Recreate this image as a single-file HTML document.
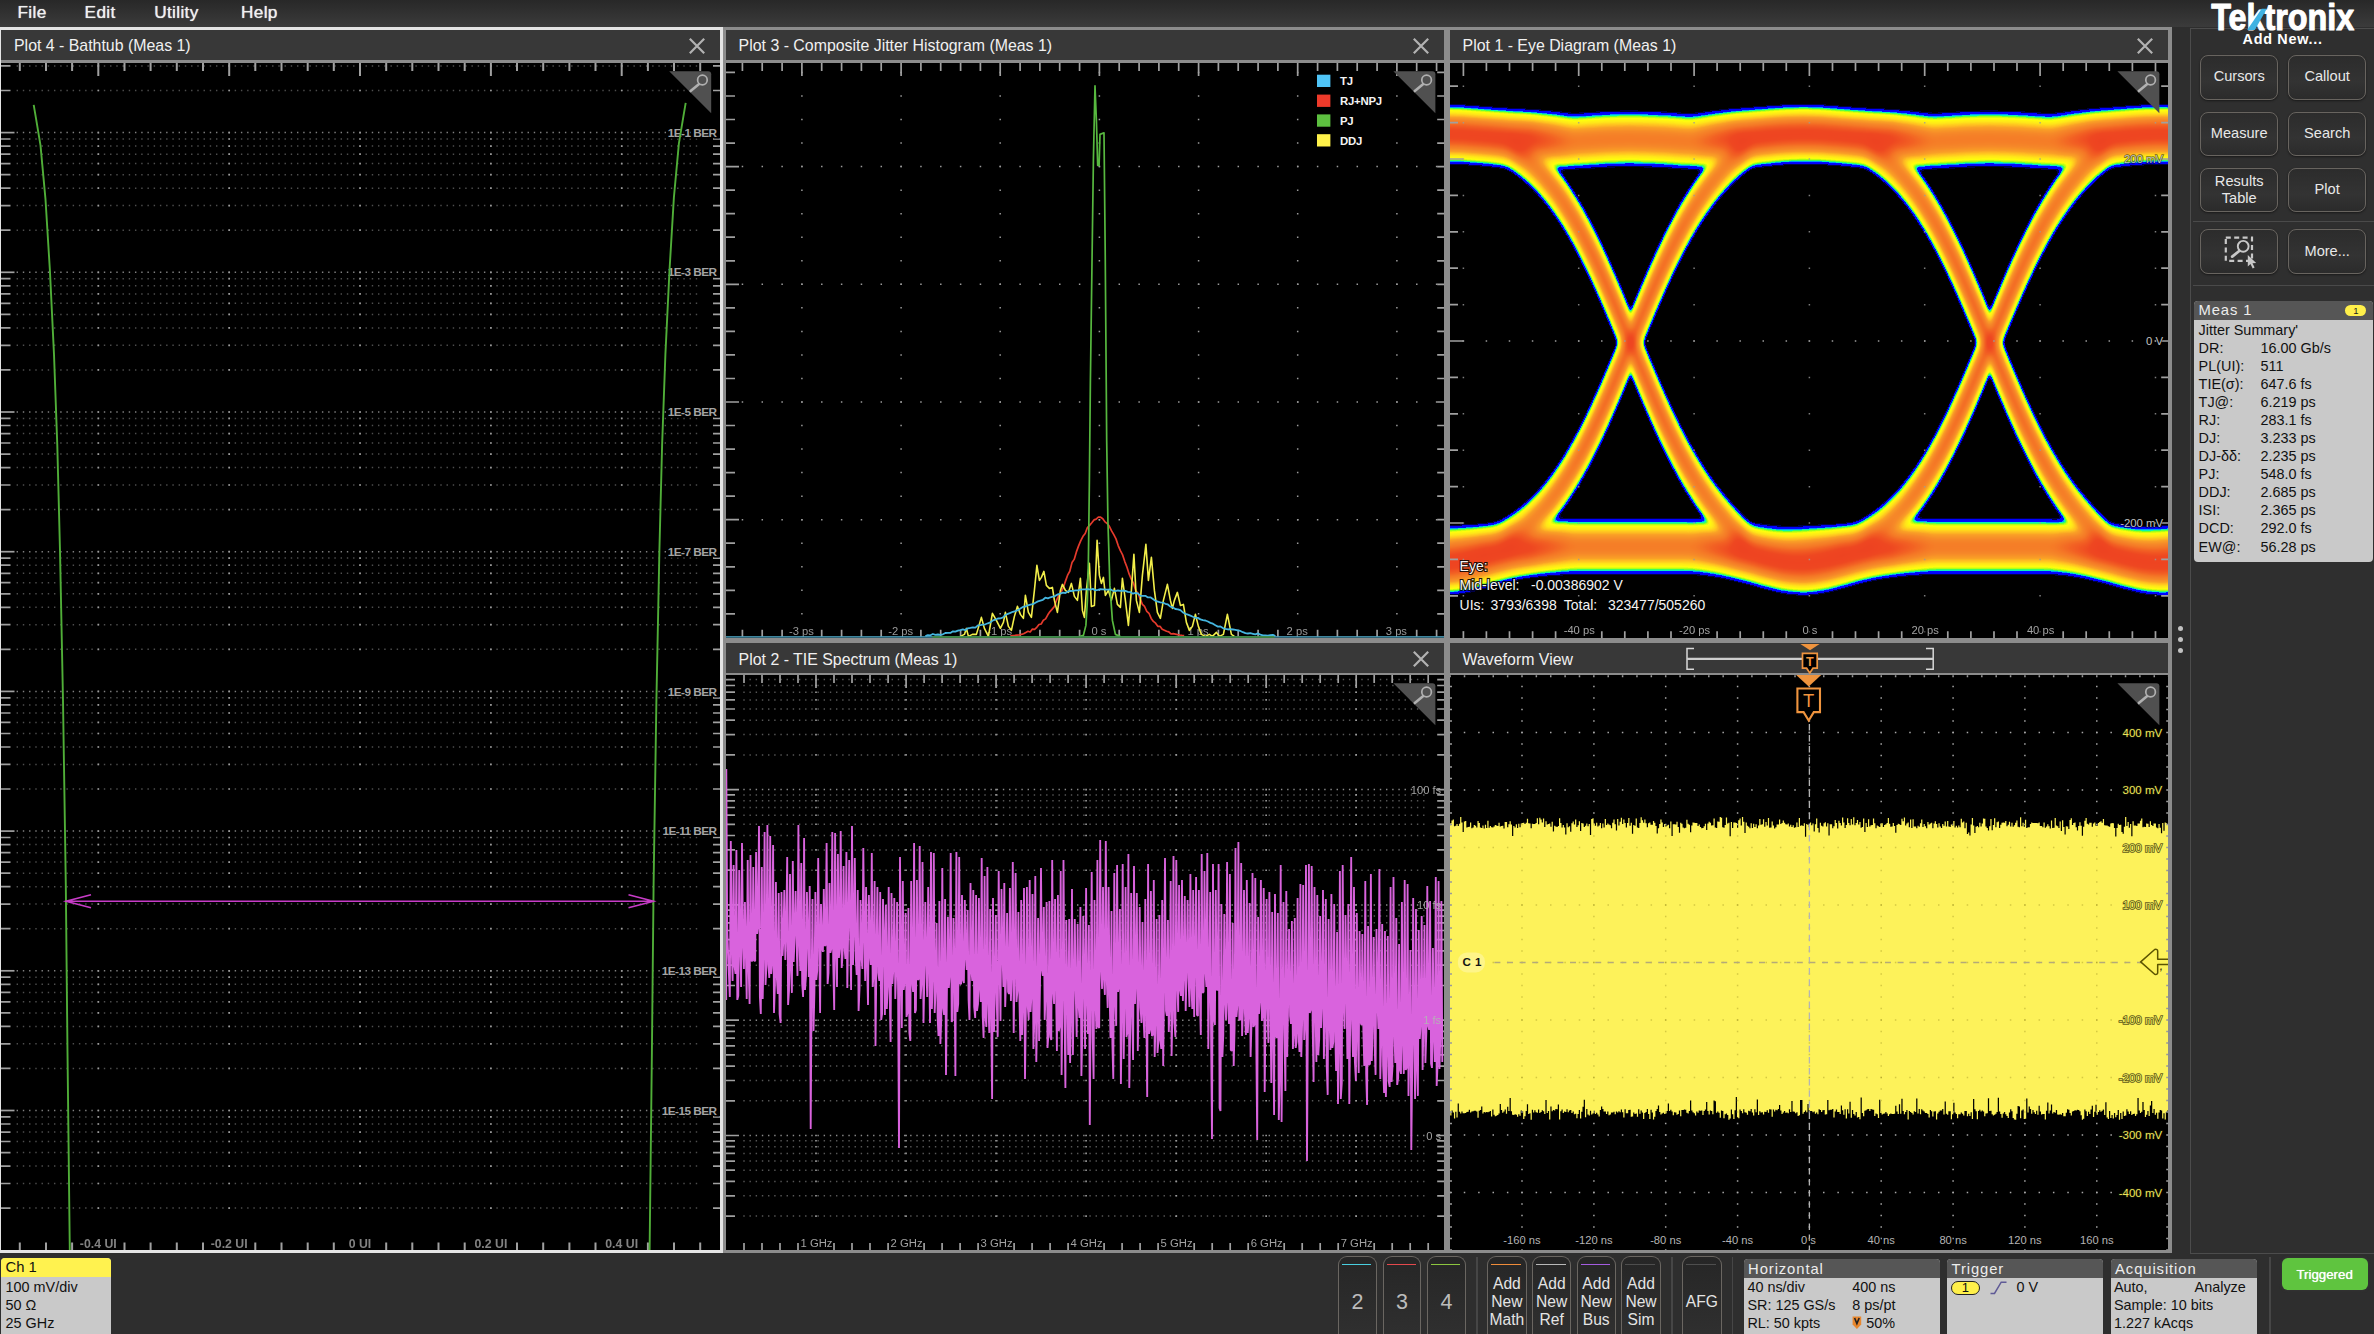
<!DOCTYPE html>
<html><head><meta charset="utf-8"><title>Scope</title>
<style>
html,body{margin:0;padding:0;background:#2e2e2e;}
body{width:2374px;height:1334px;position:relative;overflow:hidden;font-family:"Liberation Sans", sans-serif;color:#e6e6e6;}
.abs,.pb,.pt,.pp,.plot{position:absolute;}
.pt{background:#383838;color:#f0f0f0;font-size:15.9px;box-sizing:border-box;padding-left:13px;white-space:nowrap;}
.pp{background:#000;}
.plot{overflow:hidden;}
#menu{left:0;top:0;width:2374px;height:27.2px;background:linear-gradient(#282828,#3b3b3b);}
#menu span{position:absolute;top:0;line-height:25px;font-size:17.2px;letter-spacing:0.35px;color:#f0f0f0;text-shadow:0 0 0.9px #f0f0f0;}
.btn{position:absolute;box-sizing:border-box;border:1.3px solid #68645f;border-radius:8px;background:linear-gradient(#2c2c2c,#333 60%,#2b2b2b);color:#e8e8e8;font-size:14.6px;text-align:center;box-shadow:0 1px 2px #1a1a1a;}
.bb{position:absolute;box-sizing:border-box;border:1.3px solid #6a6661;border-bottom:none;border-radius:9px 9px 0 0;background:linear-gradient(#262626,#303030);color:#e4e4e4;text-align:center;font-size:15.6px;}
.bb i{position:absolute;left:3px;right:4.5px;top:6.8px;height:1.7px;display:block;}
.bb span{position:absolute;left:-6px;right:-6px;display:block;line-height:18px;}
.badge{position:absolute;box-sizing:border-box;background:#c9c9c9;color:#111;font-size:14.4px;border-radius:4px 4px 0 0;overflow:hidden;}
.badge .h{position:absolute;left:0;right:0;top:0;background:#565656;color:#ededed;padding-left:4.5px;font-size:14.8px;letter-spacing:0.9px;}
.badge span{position:absolute;white-space:pre;line-height:18px;}
.vs{position:absolute;width:1.6px;background:#464646;}
</style></head><body>
<div id="menu" class="abs"><span style="left:17.5px">File</span><span style="left:84.6px">Edit</span><span style="left:154.2px">Utility</span><span style="left:241px">Help</span></div>
<div class="pb" style="left:723px;top:27.2px;width:723.6px;height:614.3px;background:#8c8c8c"></div>
<div class="pt" style="left:725.6px;top:29.7px;width:718.2px;height:30.7px;line-height:32.2px">Plot 3 - Composite Jitter Histogram (Meas 1)</div>
<div class="pp" style="left:725.6px;top:62.6px;width:718.2px;height:575.2px"></div>
<svg class="abs" style="left:1411.2px;top:35.8px" width="20" height="20" viewBox="-10 -10 20 20"><path d="M-7.2 -7.2 L7.2 7.2 M7.2 -7.2 L-7.2 7.2" stroke="#b2b2b2" stroke-width="2.2" fill="none"/></svg>
<div class="pb" style="left:723px;top:640.5px;width:723.6px;height:612.8px;background:#8c8c8c"></div>
<div class="pt" style="left:725.6px;top:643px;width:718.2px;height:29.6px;line-height:34.6px">Plot 2 - TIE Spectrum (Meas 1)</div>
<div class="pp" style="left:725.6px;top:675.1px;width:718.2px;height:575px"></div>
<svg class="abs" style="left:1411.2px;top:648.6px" width="20" height="20" viewBox="-10 -10 20 20"><path d="M-7.2 -7.2 L7.2 7.2 M7.2 -7.2 L-7.2 7.2" stroke="#b2b2b2" stroke-width="2.2" fill="none"/></svg>
<div class="pb" style="left:1446px;top:27.2px;width:725.6px;height:614.3px;background:#8c8c8c"></div>
<div class="pt" style="left:1449.6px;top:29.7px;width:718.2px;height:30.7px;line-height:32.2px">Plot 1 - Eye Diagram (Meas 1)</div>
<div class="pp" style="left:1449.6px;top:62.6px;width:718.2px;height:575.2px"></div>
<svg class="abs" style="left:2135.2px;top:35.8px" width="20" height="20" viewBox="-10 -10 20 20"><path d="M-7.2 -7.2 L7.2 7.2 M7.2 -7.2 L-7.2 7.2" stroke="#b2b2b2" stroke-width="2.2" fill="none"/></svg>
<div class="pb" style="left:1446px;top:640.5px;width:725.6px;height:612.8px;background:#8c8c8c"></div>
<div class="pt" style="left:1449.6px;top:643px;width:718.2px;height:29.6px;line-height:34.6px">Waveform View</div>
<div class="pp" style="left:1449.6px;top:675.1px;width:718.2px;height:575px"></div>
<div class="pb" style="left:-2px;top:27px;width:725.3px;height:1226.3px;background:#e4e4e4"></div>
<div class="pt" style="left:1px;top:29.5px;width:719px;height:30.9px;line-height:32.4px">Plot 4 - Bathtub (Meas 1)</div>
<div class="pp" style="left:1px;top:62.6px;width:719px;height:1187.5px"></div>
<div class="abs" style="left:1px;top:60.4px;width:719px;height:2.2px;background:#8c8c8c"></div>
<svg class="abs" style="left:687.4px;top:35.8px" width="20" height="20" viewBox="-10 -10 20 20"><path d="M-7.2 -7.2 L7.2 7.2 M7.2 -7.2 L-7.2 7.2" stroke="#b2b2b2" stroke-width="2.2" fill="none"/></svg>
<svg class="plot" style="left:1px;top:62.6px" width="719" height="1187.5" viewBox="1 62.6 719 1187.5" font-family='"Liberation Sans", sans-serif' >
<line x1="16.6" y1="132.2" x2="701.2" y2="132.2" stroke="#808080" stroke-width="1.5" stroke-dasharray="1.4 4.831"/><line x1="97.5" y1="132.2" x2="623.7" y2="132.2" stroke="#9a9a9a" stroke-width="1.7" stroke-dasharray="1.7 129.150"/><path d="M1 132.2 h13.5" stroke="#a0a0a0" stroke-width="1.7"/><line x1="16.6" y1="90.1" x2="701.2" y2="90.1" stroke="#4e4e4e" stroke-width="1.5" stroke-dasharray="1.4 4.831"/><line x1="97.5" y1="90.1" x2="623.7" y2="90.1" stroke="#9a9a9a" stroke-width="1.7" stroke-dasharray="1.7 129.150"/><path d="M1 90.1 h9.5 M720 90.1 h-7" stroke="#a0a0a0" stroke-width="1.7"/><line x1="16.6" y1="65.5" x2="701.2" y2="65.5" stroke="#4e4e4e" stroke-width="1.5" stroke-dasharray="1.4 4.831"/><line x1="97.5" y1="65.5" x2="623.7" y2="65.5" stroke="#9a9a9a" stroke-width="1.7" stroke-dasharray="1.7 129.150"/><path d="M1 65.5 h9.5 M720 65.5 h-7" stroke="#a0a0a0" stroke-width="1.7"/><line x1="16.6" y1="271.9" x2="701.2" y2="271.9" stroke="#808080" stroke-width="1.5" stroke-dasharray="1.4 4.831"/><line x1="97.5" y1="271.9" x2="623.7" y2="271.9" stroke="#9a9a9a" stroke-width="1.7" stroke-dasharray="1.7 129.150"/><path d="M1 271.9 h13.5" stroke="#a0a0a0" stroke-width="1.7"/><line x1="16.6" y1="229.8" x2="701.2" y2="229.8" stroke="#4e4e4e" stroke-width="1.5" stroke-dasharray="1.4 4.831"/><line x1="97.5" y1="229.8" x2="623.7" y2="229.8" stroke="#9a9a9a" stroke-width="1.7" stroke-dasharray="1.7 129.150"/><path d="M1 229.8 h9.5 M720 229.8 h-7" stroke="#a0a0a0" stroke-width="1.7"/><line x1="16.6" y1="205.2" x2="701.2" y2="205.2" stroke="#4e4e4e" stroke-width="1.5" stroke-dasharray="1.4 4.831"/><line x1="97.5" y1="205.2" x2="623.7" y2="205.2" stroke="#9a9a9a" stroke-width="1.7" stroke-dasharray="1.7 129.150"/><path d="M1 205.2 h9.5 M720 205.2 h-7" stroke="#a0a0a0" stroke-width="1.7"/><line x1="16.6" y1="187.8" x2="701.2" y2="187.8" stroke="#4e4e4e" stroke-width="1.5" stroke-dasharray="1.4 4.831"/><line x1="97.5" y1="187.8" x2="623.7" y2="187.8" stroke="#9a9a9a" stroke-width="1.7" stroke-dasharray="1.7 129.150"/><path d="M1 187.8 h9.5 M720 187.8 h-7" stroke="#a0a0a0" stroke-width="1.7"/><line x1="16.6" y1="174.3" x2="701.2" y2="174.3" stroke="#4e4e4e" stroke-width="1.5" stroke-dasharray="1.4 4.831"/><line x1="97.5" y1="174.3" x2="623.7" y2="174.3" stroke="#9a9a9a" stroke-width="1.7" stroke-dasharray="1.7 129.150"/><path d="M1 174.3 h9.5 M720 174.3 h-7" stroke="#a0a0a0" stroke-width="1.7"/><line x1="16.6" y1="163.2" x2="701.2" y2="163.2" stroke="#4e4e4e" stroke-width="1.5" stroke-dasharray="1.4 4.831"/><line x1="97.5" y1="163.2" x2="623.7" y2="163.2" stroke="#9a9a9a" stroke-width="1.7" stroke-dasharray="1.7 129.150"/><path d="M1 163.2 h9.5 M720 163.2 h-7" stroke="#a0a0a0" stroke-width="1.7"/><line x1="16.6" y1="153.8" x2="701.2" y2="153.8" stroke="#4e4e4e" stroke-width="1.5" stroke-dasharray="1.4 4.831"/><line x1="97.5" y1="153.8" x2="623.7" y2="153.8" stroke="#9a9a9a" stroke-width="1.7" stroke-dasharray="1.7 129.150"/><path d="M1 153.8 h9.5 M720 153.8 h-7" stroke="#a0a0a0" stroke-width="1.7"/><line x1="16.6" y1="145.7" x2="701.2" y2="145.7" stroke="#4e4e4e" stroke-width="1.5" stroke-dasharray="1.4 4.831"/><line x1="97.5" y1="145.7" x2="623.7" y2="145.7" stroke="#9a9a9a" stroke-width="1.7" stroke-dasharray="1.7 129.150"/><path d="M1 145.7 h9.5 M720 145.7 h-7" stroke="#a0a0a0" stroke-width="1.7"/><line x1="16.6" y1="138.6" x2="701.2" y2="138.6" stroke="#4e4e4e" stroke-width="1.5" stroke-dasharray="1.4 4.831"/><line x1="97.5" y1="138.6" x2="623.7" y2="138.6" stroke="#9a9a9a" stroke-width="1.7" stroke-dasharray="1.7 129.150"/><path d="M1 138.6 h9.5 M720 138.6 h-7" stroke="#a0a0a0" stroke-width="1.7"/><line x1="16.6" y1="411.6" x2="701.2" y2="411.6" stroke="#808080" stroke-width="1.5" stroke-dasharray="1.4 4.831"/><line x1="97.5" y1="411.6" x2="623.7" y2="411.6" stroke="#9a9a9a" stroke-width="1.7" stroke-dasharray="1.7 129.150"/><path d="M1 411.6 h13.5" stroke="#a0a0a0" stroke-width="1.7"/><line x1="16.6" y1="369.5" x2="701.2" y2="369.5" stroke="#4e4e4e" stroke-width="1.5" stroke-dasharray="1.4 4.831"/><line x1="97.5" y1="369.5" x2="623.7" y2="369.5" stroke="#9a9a9a" stroke-width="1.7" stroke-dasharray="1.7 129.150"/><path d="M1 369.5 h9.5 M720 369.5 h-7" stroke="#a0a0a0" stroke-width="1.7"/><line x1="16.6" y1="344.9" x2="701.2" y2="344.9" stroke="#4e4e4e" stroke-width="1.5" stroke-dasharray="1.4 4.831"/><line x1="97.5" y1="344.9" x2="623.7" y2="344.9" stroke="#9a9a9a" stroke-width="1.7" stroke-dasharray="1.7 129.150"/><path d="M1 344.9 h9.5 M720 344.9 h-7" stroke="#a0a0a0" stroke-width="1.7"/><line x1="16.6" y1="327.5" x2="701.2" y2="327.5" stroke="#4e4e4e" stroke-width="1.5" stroke-dasharray="1.4 4.831"/><line x1="97.5" y1="327.5" x2="623.7" y2="327.5" stroke="#9a9a9a" stroke-width="1.7" stroke-dasharray="1.7 129.150"/><path d="M1 327.5 h9.5 M720 327.5 h-7" stroke="#a0a0a0" stroke-width="1.7"/><line x1="16.6" y1="314" x2="701.2" y2="314" stroke="#4e4e4e" stroke-width="1.5" stroke-dasharray="1.4 4.831"/><line x1="97.5" y1="314" x2="623.7" y2="314" stroke="#9a9a9a" stroke-width="1.7" stroke-dasharray="1.7 129.150"/><path d="M1 314 h9.5 M720 314 h-7" stroke="#a0a0a0" stroke-width="1.7"/><line x1="16.6" y1="302.9" x2="701.2" y2="302.9" stroke="#4e4e4e" stroke-width="1.5" stroke-dasharray="1.4 4.831"/><line x1="97.5" y1="302.9" x2="623.7" y2="302.9" stroke="#9a9a9a" stroke-width="1.7" stroke-dasharray="1.7 129.150"/><path d="M1 302.9 h9.5 M720 302.9 h-7" stroke="#a0a0a0" stroke-width="1.7"/><line x1="16.6" y1="293.5" x2="701.2" y2="293.5" stroke="#4e4e4e" stroke-width="1.5" stroke-dasharray="1.4 4.831"/><line x1="97.5" y1="293.5" x2="623.7" y2="293.5" stroke="#9a9a9a" stroke-width="1.7" stroke-dasharray="1.7 129.150"/><path d="M1 293.5 h9.5 M720 293.5 h-7" stroke="#a0a0a0" stroke-width="1.7"/><line x1="16.6" y1="285.4" x2="701.2" y2="285.4" stroke="#4e4e4e" stroke-width="1.5" stroke-dasharray="1.4 4.831"/><line x1="97.5" y1="285.4" x2="623.7" y2="285.4" stroke="#9a9a9a" stroke-width="1.7" stroke-dasharray="1.7 129.150"/><path d="M1 285.4 h9.5 M720 285.4 h-7" stroke="#a0a0a0" stroke-width="1.7"/><line x1="16.6" y1="278.3" x2="701.2" y2="278.3" stroke="#4e4e4e" stroke-width="1.5" stroke-dasharray="1.4 4.831"/><line x1="97.5" y1="278.3" x2="623.7" y2="278.3" stroke="#9a9a9a" stroke-width="1.7" stroke-dasharray="1.7 129.150"/><path d="M1 278.3 h9.5 M720 278.3 h-7" stroke="#a0a0a0" stroke-width="1.7"/><line x1="16.6" y1="551.3" x2="701.2" y2="551.3" stroke="#808080" stroke-width="1.5" stroke-dasharray="1.4 4.831"/><line x1="97.5" y1="551.3" x2="623.7" y2="551.3" stroke="#9a9a9a" stroke-width="1.7" stroke-dasharray="1.7 129.150"/><path d="M1 551.3 h13.5" stroke="#a0a0a0" stroke-width="1.7"/><line x1="16.6" y1="509.2" x2="701.2" y2="509.2" stroke="#4e4e4e" stroke-width="1.5" stroke-dasharray="1.4 4.831"/><line x1="97.5" y1="509.2" x2="623.7" y2="509.2" stroke="#9a9a9a" stroke-width="1.7" stroke-dasharray="1.7 129.150"/><path d="M1 509.2 h9.5 M720 509.2 h-7" stroke="#a0a0a0" stroke-width="1.7"/><line x1="16.6" y1="484.6" x2="701.2" y2="484.6" stroke="#4e4e4e" stroke-width="1.5" stroke-dasharray="1.4 4.831"/><line x1="97.5" y1="484.6" x2="623.7" y2="484.6" stroke="#9a9a9a" stroke-width="1.7" stroke-dasharray="1.7 129.150"/><path d="M1 484.6 h9.5 M720 484.6 h-7" stroke="#a0a0a0" stroke-width="1.7"/><line x1="16.6" y1="467.2" x2="701.2" y2="467.2" stroke="#4e4e4e" stroke-width="1.5" stroke-dasharray="1.4 4.831"/><line x1="97.5" y1="467.2" x2="623.7" y2="467.2" stroke="#9a9a9a" stroke-width="1.7" stroke-dasharray="1.7 129.150"/><path d="M1 467.2 h9.5 M720 467.2 h-7" stroke="#a0a0a0" stroke-width="1.7"/><line x1="16.6" y1="453.7" x2="701.2" y2="453.7" stroke="#4e4e4e" stroke-width="1.5" stroke-dasharray="1.4 4.831"/><line x1="97.5" y1="453.7" x2="623.7" y2="453.7" stroke="#9a9a9a" stroke-width="1.7" stroke-dasharray="1.7 129.150"/><path d="M1 453.7 h9.5 M720 453.7 h-7" stroke="#a0a0a0" stroke-width="1.7"/><line x1="16.6" y1="442.6" x2="701.2" y2="442.6" stroke="#4e4e4e" stroke-width="1.5" stroke-dasharray="1.4 4.831"/><line x1="97.5" y1="442.6" x2="623.7" y2="442.6" stroke="#9a9a9a" stroke-width="1.7" stroke-dasharray="1.7 129.150"/><path d="M1 442.6 h9.5 M720 442.6 h-7" stroke="#a0a0a0" stroke-width="1.7"/><line x1="16.6" y1="433.2" x2="701.2" y2="433.2" stroke="#4e4e4e" stroke-width="1.5" stroke-dasharray="1.4 4.831"/><line x1="97.5" y1="433.2" x2="623.7" y2="433.2" stroke="#9a9a9a" stroke-width="1.7" stroke-dasharray="1.7 129.150"/><path d="M1 433.2 h9.5 M720 433.2 h-7" stroke="#a0a0a0" stroke-width="1.7"/><line x1="16.6" y1="425.1" x2="701.2" y2="425.1" stroke="#4e4e4e" stroke-width="1.5" stroke-dasharray="1.4 4.831"/><line x1="97.5" y1="425.1" x2="623.7" y2="425.1" stroke="#9a9a9a" stroke-width="1.7" stroke-dasharray="1.7 129.150"/><path d="M1 425.1 h9.5 M720 425.1 h-7" stroke="#a0a0a0" stroke-width="1.7"/><line x1="16.6" y1="418" x2="701.2" y2="418" stroke="#4e4e4e" stroke-width="1.5" stroke-dasharray="1.4 4.831"/><line x1="97.5" y1="418" x2="623.7" y2="418" stroke="#9a9a9a" stroke-width="1.7" stroke-dasharray="1.7 129.150"/><path d="M1 418 h9.5 M720 418 h-7" stroke="#a0a0a0" stroke-width="1.7"/><line x1="16.6" y1="691" x2="701.2" y2="691" stroke="#808080" stroke-width="1.5" stroke-dasharray="1.4 4.831"/><line x1="97.5" y1="691" x2="623.7" y2="691" stroke="#9a9a9a" stroke-width="1.7" stroke-dasharray="1.7 129.150"/><path d="M1 691 h13.5" stroke="#a0a0a0" stroke-width="1.7"/><line x1="16.6" y1="648.9" x2="701.2" y2="648.9" stroke="#4e4e4e" stroke-width="1.5" stroke-dasharray="1.4 4.831"/><line x1="97.5" y1="648.9" x2="623.7" y2="648.9" stroke="#9a9a9a" stroke-width="1.7" stroke-dasharray="1.7 129.150"/><path d="M1 648.9 h9.5 M720 648.9 h-7" stroke="#a0a0a0" stroke-width="1.7"/><line x1="16.6" y1="624.3" x2="701.2" y2="624.3" stroke="#4e4e4e" stroke-width="1.5" stroke-dasharray="1.4 4.831"/><line x1="97.5" y1="624.3" x2="623.7" y2="624.3" stroke="#9a9a9a" stroke-width="1.7" stroke-dasharray="1.7 129.150"/><path d="M1 624.3 h9.5 M720 624.3 h-7" stroke="#a0a0a0" stroke-width="1.7"/><line x1="16.6" y1="606.9" x2="701.2" y2="606.9" stroke="#4e4e4e" stroke-width="1.5" stroke-dasharray="1.4 4.831"/><line x1="97.5" y1="606.9" x2="623.7" y2="606.9" stroke="#9a9a9a" stroke-width="1.7" stroke-dasharray="1.7 129.150"/><path d="M1 606.9 h9.5 M720 606.9 h-7" stroke="#a0a0a0" stroke-width="1.7"/><line x1="16.6" y1="593.4" x2="701.2" y2="593.4" stroke="#4e4e4e" stroke-width="1.5" stroke-dasharray="1.4 4.831"/><line x1="97.5" y1="593.4" x2="623.7" y2="593.4" stroke="#9a9a9a" stroke-width="1.7" stroke-dasharray="1.7 129.150"/><path d="M1 593.4 h9.5 M720 593.4 h-7" stroke="#a0a0a0" stroke-width="1.7"/><line x1="16.6" y1="582.3" x2="701.2" y2="582.3" stroke="#4e4e4e" stroke-width="1.5" stroke-dasharray="1.4 4.831"/><line x1="97.5" y1="582.3" x2="623.7" y2="582.3" stroke="#9a9a9a" stroke-width="1.7" stroke-dasharray="1.7 129.150"/><path d="M1 582.3 h9.5 M720 582.3 h-7" stroke="#a0a0a0" stroke-width="1.7"/><line x1="16.6" y1="572.9" x2="701.2" y2="572.9" stroke="#4e4e4e" stroke-width="1.5" stroke-dasharray="1.4 4.831"/><line x1="97.5" y1="572.9" x2="623.7" y2="572.9" stroke="#9a9a9a" stroke-width="1.7" stroke-dasharray="1.7 129.150"/><path d="M1 572.9 h9.5 M720 572.9 h-7" stroke="#a0a0a0" stroke-width="1.7"/><line x1="16.6" y1="564.8" x2="701.2" y2="564.8" stroke="#4e4e4e" stroke-width="1.5" stroke-dasharray="1.4 4.831"/><line x1="97.5" y1="564.8" x2="623.7" y2="564.8" stroke="#9a9a9a" stroke-width="1.7" stroke-dasharray="1.7 129.150"/><path d="M1 564.8 h9.5 M720 564.8 h-7" stroke="#a0a0a0" stroke-width="1.7"/><line x1="16.6" y1="557.7" x2="701.2" y2="557.7" stroke="#4e4e4e" stroke-width="1.5" stroke-dasharray="1.4 4.831"/><line x1="97.5" y1="557.7" x2="623.7" y2="557.7" stroke="#9a9a9a" stroke-width="1.7" stroke-dasharray="1.7 129.150"/><path d="M1 557.7 h9.5 M720 557.7 h-7" stroke="#a0a0a0" stroke-width="1.7"/><line x1="16.6" y1="830.7" x2="701.2" y2="830.7" stroke="#808080" stroke-width="1.5" stroke-dasharray="1.4 4.831"/><line x1="97.5" y1="830.7" x2="623.7" y2="830.7" stroke="#9a9a9a" stroke-width="1.7" stroke-dasharray="1.7 129.150"/><path d="M1 830.7 h13.5" stroke="#a0a0a0" stroke-width="1.7"/><line x1="16.6" y1="788.6" x2="701.2" y2="788.6" stroke="#4e4e4e" stroke-width="1.5" stroke-dasharray="1.4 4.831"/><line x1="97.5" y1="788.6" x2="623.7" y2="788.6" stroke="#9a9a9a" stroke-width="1.7" stroke-dasharray="1.7 129.150"/><path d="M1 788.6 h9.5 M720 788.6 h-7" stroke="#a0a0a0" stroke-width="1.7"/><line x1="16.6" y1="764" x2="701.2" y2="764" stroke="#4e4e4e" stroke-width="1.5" stroke-dasharray="1.4 4.831"/><line x1="97.5" y1="764" x2="623.7" y2="764" stroke="#9a9a9a" stroke-width="1.7" stroke-dasharray="1.7 129.150"/><path d="M1 764 h9.5 M720 764 h-7" stroke="#a0a0a0" stroke-width="1.7"/><line x1="16.6" y1="746.6" x2="701.2" y2="746.6" stroke="#4e4e4e" stroke-width="1.5" stroke-dasharray="1.4 4.831"/><line x1="97.5" y1="746.6" x2="623.7" y2="746.6" stroke="#9a9a9a" stroke-width="1.7" stroke-dasharray="1.7 129.150"/><path d="M1 746.6 h9.5 M720 746.6 h-7" stroke="#a0a0a0" stroke-width="1.7"/><line x1="16.6" y1="733.1" x2="701.2" y2="733.1" stroke="#4e4e4e" stroke-width="1.5" stroke-dasharray="1.4 4.831"/><line x1="97.5" y1="733.1" x2="623.7" y2="733.1" stroke="#9a9a9a" stroke-width="1.7" stroke-dasharray="1.7 129.150"/><path d="M1 733.1 h9.5 M720 733.1 h-7" stroke="#a0a0a0" stroke-width="1.7"/><line x1="16.6" y1="722" x2="701.2" y2="722" stroke="#4e4e4e" stroke-width="1.5" stroke-dasharray="1.4 4.831"/><line x1="97.5" y1="722" x2="623.7" y2="722" stroke="#9a9a9a" stroke-width="1.7" stroke-dasharray="1.7 129.150"/><path d="M1 722 h9.5 M720 722 h-7" stroke="#a0a0a0" stroke-width="1.7"/><line x1="16.6" y1="712.6" x2="701.2" y2="712.6" stroke="#4e4e4e" stroke-width="1.5" stroke-dasharray="1.4 4.831"/><line x1="97.5" y1="712.6" x2="623.7" y2="712.6" stroke="#9a9a9a" stroke-width="1.7" stroke-dasharray="1.7 129.150"/><path d="M1 712.6 h9.5 M720 712.6 h-7" stroke="#a0a0a0" stroke-width="1.7"/><line x1="16.6" y1="704.5" x2="701.2" y2="704.5" stroke="#4e4e4e" stroke-width="1.5" stroke-dasharray="1.4 4.831"/><line x1="97.5" y1="704.5" x2="623.7" y2="704.5" stroke="#9a9a9a" stroke-width="1.7" stroke-dasharray="1.7 129.150"/><path d="M1 704.5 h9.5 M720 704.5 h-7" stroke="#a0a0a0" stroke-width="1.7"/><line x1="16.6" y1="697.4" x2="701.2" y2="697.4" stroke="#4e4e4e" stroke-width="1.5" stroke-dasharray="1.4 4.831"/><line x1="97.5" y1="697.4" x2="623.7" y2="697.4" stroke="#9a9a9a" stroke-width="1.7" stroke-dasharray="1.7 129.150"/><path d="M1 697.4 h9.5 M720 697.4 h-7" stroke="#a0a0a0" stroke-width="1.7"/><line x1="16.6" y1="970.4" x2="701.2" y2="970.4" stroke="#808080" stroke-width="1.5" stroke-dasharray="1.4 4.831"/><line x1="97.5" y1="970.4" x2="623.7" y2="970.4" stroke="#9a9a9a" stroke-width="1.7" stroke-dasharray="1.7 129.150"/><path d="M1 970.4 h13.5" stroke="#a0a0a0" stroke-width="1.7"/><line x1="16.6" y1="928.3" x2="701.2" y2="928.3" stroke="#4e4e4e" stroke-width="1.5" stroke-dasharray="1.4 4.831"/><line x1="97.5" y1="928.3" x2="623.7" y2="928.3" stroke="#9a9a9a" stroke-width="1.7" stroke-dasharray="1.7 129.150"/><path d="M1 928.3 h9.5 M720 928.3 h-7" stroke="#a0a0a0" stroke-width="1.7"/><line x1="16.6" y1="903.7" x2="701.2" y2="903.7" stroke="#4e4e4e" stroke-width="1.5" stroke-dasharray="1.4 4.831"/><line x1="97.5" y1="903.7" x2="623.7" y2="903.7" stroke="#9a9a9a" stroke-width="1.7" stroke-dasharray="1.7 129.150"/><path d="M1 903.7 h9.5 M720 903.7 h-7" stroke="#a0a0a0" stroke-width="1.7"/><line x1="16.6" y1="886.3" x2="701.2" y2="886.3" stroke="#4e4e4e" stroke-width="1.5" stroke-dasharray="1.4 4.831"/><line x1="97.5" y1="886.3" x2="623.7" y2="886.3" stroke="#9a9a9a" stroke-width="1.7" stroke-dasharray="1.7 129.150"/><path d="M1 886.3 h9.5 M720 886.3 h-7" stroke="#a0a0a0" stroke-width="1.7"/><line x1="16.6" y1="872.8" x2="701.2" y2="872.8" stroke="#4e4e4e" stroke-width="1.5" stroke-dasharray="1.4 4.831"/><line x1="97.5" y1="872.8" x2="623.7" y2="872.8" stroke="#9a9a9a" stroke-width="1.7" stroke-dasharray="1.7 129.150"/><path d="M1 872.8 h9.5 M720 872.8 h-7" stroke="#a0a0a0" stroke-width="1.7"/><line x1="16.6" y1="861.7" x2="701.2" y2="861.7" stroke="#4e4e4e" stroke-width="1.5" stroke-dasharray="1.4 4.831"/><line x1="97.5" y1="861.7" x2="623.7" y2="861.7" stroke="#9a9a9a" stroke-width="1.7" stroke-dasharray="1.7 129.150"/><path d="M1 861.7 h9.5 M720 861.7 h-7" stroke="#a0a0a0" stroke-width="1.7"/><line x1="16.6" y1="852.3" x2="701.2" y2="852.3" stroke="#4e4e4e" stroke-width="1.5" stroke-dasharray="1.4 4.831"/><line x1="97.5" y1="852.3" x2="623.7" y2="852.3" stroke="#9a9a9a" stroke-width="1.7" stroke-dasharray="1.7 129.150"/><path d="M1 852.3 h9.5 M720 852.3 h-7" stroke="#a0a0a0" stroke-width="1.7"/><line x1="16.6" y1="844.2" x2="701.2" y2="844.2" stroke="#4e4e4e" stroke-width="1.5" stroke-dasharray="1.4 4.831"/><line x1="97.5" y1="844.2" x2="623.7" y2="844.2" stroke="#9a9a9a" stroke-width="1.7" stroke-dasharray="1.7 129.150"/><path d="M1 844.2 h9.5 M720 844.2 h-7" stroke="#a0a0a0" stroke-width="1.7"/><line x1="16.6" y1="837.1" x2="701.2" y2="837.1" stroke="#4e4e4e" stroke-width="1.5" stroke-dasharray="1.4 4.831"/><line x1="97.5" y1="837.1" x2="623.7" y2="837.1" stroke="#9a9a9a" stroke-width="1.7" stroke-dasharray="1.7 129.150"/><path d="M1 837.1 h9.5 M720 837.1 h-7" stroke="#a0a0a0" stroke-width="1.7"/><line x1="16.6" y1="1110.1" x2="701.2" y2="1110.1" stroke="#808080" stroke-width="1.5" stroke-dasharray="1.4 4.831"/><line x1="97.5" y1="1110.1" x2="623.7" y2="1110.1" stroke="#9a9a9a" stroke-width="1.7" stroke-dasharray="1.7 129.150"/><path d="M1 1110.1 h13.5" stroke="#a0a0a0" stroke-width="1.7"/><line x1="16.6" y1="1068" x2="701.2" y2="1068" stroke="#4e4e4e" stroke-width="1.5" stroke-dasharray="1.4 4.831"/><line x1="97.5" y1="1068" x2="623.7" y2="1068" stroke="#9a9a9a" stroke-width="1.7" stroke-dasharray="1.7 129.150"/><path d="M1 1068 h9.5 M720 1068 h-7" stroke="#a0a0a0" stroke-width="1.7"/><line x1="16.6" y1="1043.4" x2="701.2" y2="1043.4" stroke="#4e4e4e" stroke-width="1.5" stroke-dasharray="1.4 4.831"/><line x1="97.5" y1="1043.4" x2="623.7" y2="1043.4" stroke="#9a9a9a" stroke-width="1.7" stroke-dasharray="1.7 129.150"/><path d="M1 1043.4 h9.5 M720 1043.4 h-7" stroke="#a0a0a0" stroke-width="1.7"/><line x1="16.6" y1="1026" x2="701.2" y2="1026" stroke="#4e4e4e" stroke-width="1.5" stroke-dasharray="1.4 4.831"/><line x1="97.5" y1="1026" x2="623.7" y2="1026" stroke="#9a9a9a" stroke-width="1.7" stroke-dasharray="1.7 129.150"/><path d="M1 1026 h9.5 M720 1026 h-7" stroke="#a0a0a0" stroke-width="1.7"/><line x1="16.6" y1="1012.5" x2="701.2" y2="1012.5" stroke="#4e4e4e" stroke-width="1.5" stroke-dasharray="1.4 4.831"/><line x1="97.5" y1="1012.5" x2="623.7" y2="1012.5" stroke="#9a9a9a" stroke-width="1.7" stroke-dasharray="1.7 129.150"/><path d="M1 1012.5 h9.5 M720 1012.5 h-7" stroke="#a0a0a0" stroke-width="1.7"/><line x1="16.6" y1="1001.4" x2="701.2" y2="1001.4" stroke="#4e4e4e" stroke-width="1.5" stroke-dasharray="1.4 4.831"/><line x1="97.5" y1="1001.4" x2="623.7" y2="1001.4" stroke="#9a9a9a" stroke-width="1.7" stroke-dasharray="1.7 129.150"/><path d="M1 1001.4 h9.5 M720 1001.4 h-7" stroke="#a0a0a0" stroke-width="1.7"/><line x1="16.6" y1="992" x2="701.2" y2="992" stroke="#4e4e4e" stroke-width="1.5" stroke-dasharray="1.4 4.831"/><line x1="97.5" y1="992" x2="623.7" y2="992" stroke="#9a9a9a" stroke-width="1.7" stroke-dasharray="1.7 129.150"/><path d="M1 992 h9.5 M720 992 h-7" stroke="#a0a0a0" stroke-width="1.7"/><line x1="16.6" y1="983.9" x2="701.2" y2="983.9" stroke="#4e4e4e" stroke-width="1.5" stroke-dasharray="1.4 4.831"/><line x1="97.5" y1="983.9" x2="623.7" y2="983.9" stroke="#9a9a9a" stroke-width="1.7" stroke-dasharray="1.7 129.150"/><path d="M1 983.9 h9.5 M720 983.9 h-7" stroke="#a0a0a0" stroke-width="1.7"/><line x1="16.6" y1="976.8" x2="701.2" y2="976.8" stroke="#4e4e4e" stroke-width="1.5" stroke-dasharray="1.4 4.831"/><line x1="97.5" y1="976.8" x2="623.7" y2="976.8" stroke="#9a9a9a" stroke-width="1.7" stroke-dasharray="1.7 129.150"/><path d="M1 976.8 h9.5 M720 976.8 h-7" stroke="#a0a0a0" stroke-width="1.7"/><line x1="16.6" y1="1207.7" x2="701.2" y2="1207.7" stroke="#4e4e4e" stroke-width="1.5" stroke-dasharray="1.4 4.831"/><line x1="97.5" y1="1207.7" x2="623.7" y2="1207.7" stroke="#9a9a9a" stroke-width="1.7" stroke-dasharray="1.7 129.150"/><path d="M1 1207.7 h9.5 M720 1207.7 h-7" stroke="#a0a0a0" stroke-width="1.7"/><line x1="16.6" y1="1183.1" x2="701.2" y2="1183.1" stroke="#4e4e4e" stroke-width="1.5" stroke-dasharray="1.4 4.831"/><line x1="97.5" y1="1183.1" x2="623.7" y2="1183.1" stroke="#9a9a9a" stroke-width="1.7" stroke-dasharray="1.7 129.150"/><path d="M1 1183.1 h9.5 M720 1183.1 h-7" stroke="#a0a0a0" stroke-width="1.7"/><line x1="16.6" y1="1165.7" x2="701.2" y2="1165.7" stroke="#4e4e4e" stroke-width="1.5" stroke-dasharray="1.4 4.831"/><line x1="97.5" y1="1165.7" x2="623.7" y2="1165.7" stroke="#9a9a9a" stroke-width="1.7" stroke-dasharray="1.7 129.150"/><path d="M1 1165.7 h9.5 M720 1165.7 h-7" stroke="#a0a0a0" stroke-width="1.7"/><line x1="16.6" y1="1152.2" x2="701.2" y2="1152.2" stroke="#4e4e4e" stroke-width="1.5" stroke-dasharray="1.4 4.831"/><line x1="97.5" y1="1152.2" x2="623.7" y2="1152.2" stroke="#9a9a9a" stroke-width="1.7" stroke-dasharray="1.7 129.150"/><path d="M1 1152.2 h9.5 M720 1152.2 h-7" stroke="#a0a0a0" stroke-width="1.7"/><line x1="16.6" y1="1141.1" x2="701.2" y2="1141.1" stroke="#4e4e4e" stroke-width="1.5" stroke-dasharray="1.4 4.831"/><line x1="97.5" y1="1141.1" x2="623.7" y2="1141.1" stroke="#9a9a9a" stroke-width="1.7" stroke-dasharray="1.7 129.150"/><path d="M1 1141.1 h9.5 M720 1141.1 h-7" stroke="#a0a0a0" stroke-width="1.7"/><line x1="16.6" y1="1131.7" x2="701.2" y2="1131.7" stroke="#4e4e4e" stroke-width="1.5" stroke-dasharray="1.4 4.831"/><line x1="97.5" y1="1131.7" x2="623.7" y2="1131.7" stroke="#9a9a9a" stroke-width="1.7" stroke-dasharray="1.7 129.150"/><path d="M1 1131.7 h9.5 M720 1131.7 h-7" stroke="#a0a0a0" stroke-width="1.7"/><line x1="16.6" y1="1123.6" x2="701.2" y2="1123.6" stroke="#4e4e4e" stroke-width="1.5" stroke-dasharray="1.4 4.831"/><line x1="97.5" y1="1123.6" x2="623.7" y2="1123.6" stroke="#9a9a9a" stroke-width="1.7" stroke-dasharray="1.7 129.150"/><path d="M1 1123.6 h9.5 M720 1123.6 h-7" stroke="#a0a0a0" stroke-width="1.7"/><line x1="16.6" y1="1116.5" x2="701.2" y2="1116.5" stroke="#4e4e4e" stroke-width="1.5" stroke-dasharray="1.4 4.831"/><line x1="97.5" y1="1116.5" x2="623.7" y2="1116.5" stroke="#9a9a9a" stroke-width="1.7" stroke-dasharray="1.7 129.150"/><path d="M1 1116.5 h9.5 M720 1116.5 h-7" stroke="#a0a0a0" stroke-width="1.7"/>
<path d="M19.8 62.6 v8 M19.8 1250.1 v-8 M46 62.6 v8 M46 1250.1 v-8 M72.1 62.6 v8 M72.1 1250.1 v-8 M98.3 62.6 v13 M124.5 62.6 v8 M124.5 1250.1 v-8 M150.6 62.6 v8 M150.6 1250.1 v-8 M176.8 62.6 v8 M176.8 1250.1 v-8 M203 62.6 v8 M203 1250.1 v-8 M229.2 62.6 v13 M255.3 62.6 v8 M255.3 1250.1 v-8 M281.5 62.6 v8 M281.5 1250.1 v-8 M307.7 62.6 v8 M307.7 1250.1 v-8 M333.8 62.6 v8 M333.8 1250.1 v-8 M360 62.6 v13 M386.2 62.6 v8 M386.2 1250.1 v-8 M412.3 62.6 v8 M412.3 1250.1 v-8 M438.5 62.6 v8 M438.5 1250.1 v-8 M464.7 62.6 v8 M464.7 1250.1 v-8 M490.9 62.6 v13 M517 62.6 v8 M517 1250.1 v-8 M543.2 62.6 v8 M543.2 1250.1 v-8 M569.4 62.6 v8 M569.4 1250.1 v-8 M595.5 62.6 v8 M595.5 1250.1 v-8 M621.7 62.6 v13 M647.9 62.6 v8 M647.9 1250.1 v-8 M674 62.6 v8 M674 1250.1 v-8 M700.2 62.6 v8 M700.2 1250.1 v-8" stroke="#a0a0a0" stroke-width="2" fill="none"/>
<text x="98.3" y="1247.5" font-size="12.3" fill="#b4b4b4" text-anchor="middle" font-weight="700" opacity="0.72">-0.4 UI</text>
<text x="229.2" y="1247.5" font-size="12.3" fill="#b4b4b4" text-anchor="middle" font-weight="700" opacity="0.72">-0.2 UI</text>
<text x="360" y="1247.5" font-size="12.3" fill="#b4b4b4" text-anchor="middle" font-weight="700" opacity="0.72">0 UI</text>
<text x="490.9" y="1247.5" font-size="12.3" fill="#b4b4b4" text-anchor="middle" font-weight="700" opacity="0.72">0.2 UI</text>
<text x="621.7" y="1247.5" font-size="12.3" fill="#b4b4b4" text-anchor="middle" font-weight="700" opacity="0.72">0.4 UI</text>
<text x="716.5" y="136.4" font-size="11.8" fill="#a4a4a4" text-anchor="end" font-weight="700" letter-spacing="-0.55" style="paint-order:stroke" stroke="#000" stroke-width="3">1E-1 BER</text>
<text x="716.5" y="276.1" font-size="11.8" fill="#a4a4a4" text-anchor="end" font-weight="700" letter-spacing="-0.55" style="paint-order:stroke" stroke="#000" stroke-width="3">1E-3 BER</text>
<text x="716.5" y="415.8" font-size="11.8" fill="#a4a4a4" text-anchor="end" font-weight="700" letter-spacing="-0.55" style="paint-order:stroke" stroke="#000" stroke-width="3">1E-5 BER</text>
<text x="716.5" y="555.5" font-size="11.8" fill="#a4a4a4" text-anchor="end" font-weight="700" letter-spacing="-0.55" style="paint-order:stroke" stroke="#000" stroke-width="3">1E-7 BER</text>
<text x="716.5" y="695.2" font-size="11.8" fill="#a4a4a4" text-anchor="end" font-weight="700" letter-spacing="-0.55" style="paint-order:stroke" stroke="#000" stroke-width="3">1E-9 BER</text>
<text x="716.5" y="834.9" font-size="11.8" fill="#a4a4a4" text-anchor="end" font-weight="700" letter-spacing="-0.55" style="paint-order:stroke" stroke="#000" stroke-width="3">1E-11 BER</text>
<text x="716.5" y="974.6" font-size="11.8" fill="#a4a4a4" text-anchor="end" font-weight="700" letter-spacing="-0.55" style="paint-order:stroke" stroke="#000" stroke-width="3">1E-13 BER</text>
<text x="716.5" y="1114.3" font-size="11.8" fill="#a4a4a4" text-anchor="end" font-weight="700" letter-spacing="-0.55" style="paint-order:stroke" stroke="#000" stroke-width="3">1E-15 BER</text>
<path d="M33.7 104.5 L36 118 L40.5 145 L45.5 199 L49.9 270 L54 354 L57.3 445 L60 550 L63 700 L65.8 884 L67.5 1052 L69.8 1250" stroke="#50ae38" stroke-width="1.9" fill="none" stroke-linejoin="round"/>
<path d="M685.7 102.5 L683.4 116 L678.9 143 L673.9 197 L669.5 270 L665.4 354 L662.1 445 L659.4 550 L656.4 700 L653.6 884 L651.9 1052 L649.6 1250" stroke="#50ae38" stroke-width="1.9" fill="none" stroke-linejoin="round"/>
<path d="M66 900.9 H653.5 M91 894.4 L66 900.9 L91 907.4 M628.5 894.4 L653.5 900.9 L628.5 907.4" stroke="#c83cc8" stroke-width="1.6" fill="none"/>
<path d="M669.2 70.8 H708.2 Q711.2 70.8 711.2 73.8 V112.8 Z" fill="#505050"/><circle cx="702.4" cy="79.6" r="4.8" fill="none" stroke="#b0b0b0" stroke-width="1.7"/><line x1="698.8" y1="83.8" x2="690.6" y2="90.6" stroke="#b0b0b0" stroke-width="2.6" stroke-linecap="round"/>
</svg>
<svg class="plot" style="left:725.6px;top:62.6px" width="718.2" height="575.2" viewBox="725.6 62.6 718.2 575.2" font-family='"Liberation Sans", sans-serif' >
<line x1="741.3" y1="519.3" x2="1437.2" y2="519.3" stroke="#9a9a9a" stroke-width="1.5" stroke-dasharray="1.5 18.334"/><line x1="741.3" y1="401.6" x2="1437.2" y2="401.6" stroke="#9a9a9a" stroke-width="1.5" stroke-dasharray="1.5 18.334"/><line x1="741.3" y1="283.9" x2="1437.2" y2="283.9" stroke="#9a9a9a" stroke-width="1.5" stroke-dasharray="1.5 18.334"/><line x1="741.3" y1="166.2" x2="1437.2" y2="166.2" stroke="#9a9a9a" stroke-width="1.5" stroke-dasharray="1.5 18.334"/><line x1="801.5" y1="71.3" x2="801.5" y2="636.5" stroke="#9a9a9a" stroke-width="1.5" stroke-dasharray="1.5 22.040"/><line x1="900.7" y1="71.3" x2="900.7" y2="636.5" stroke="#9a9a9a" stroke-width="1.5" stroke-dasharray="1.5 22.040"/><line x1="999.8" y1="71.3" x2="999.8" y2="636.5" stroke="#9a9a9a" stroke-width="1.5" stroke-dasharray="1.5 22.040"/><line x1="1099" y1="71.3" x2="1099" y2="636.5" stroke="#9a9a9a" stroke-width="1.5" stroke-dasharray="1.5 22.040"/><line x1="1198.2" y1="71.3" x2="1198.2" y2="636.5" stroke="#9a9a9a" stroke-width="1.5" stroke-dasharray="1.5 22.040"/><line x1="1297.3" y1="71.3" x2="1297.3" y2="636.5" stroke="#9a9a9a" stroke-width="1.5" stroke-dasharray="1.5 22.040"/><line x1="1396.5" y1="71.3" x2="1396.5" y2="636.5" stroke="#9a9a9a" stroke-width="1.5" stroke-dasharray="1.5 22.040"/>
<path d="M742 62.6 v8 M742 636.3 v-7 M761.8 62.6 v8 M761.8 636.3 v-7 M781.7 62.6 v8 M781.7 636.3 v-7 M801.5 62.6 v13 M821.3 62.6 v8 M821.3 636.3 v-7 M841.2 62.6 v8 M841.2 636.3 v-7 M861 62.6 v8 M861 636.3 v-7 M880.8 62.6 v8 M880.8 636.3 v-7 M900.7 62.6 v13 M920.5 62.6 v8 M920.5 636.3 v-7 M940.3 62.6 v8 M940.3 636.3 v-7 M960.2 62.6 v8 M960.2 636.3 v-7 M980 62.6 v8 M980 636.3 v-7 M999.8 62.6 v13 M1019.7 62.6 v8 M1019.7 636.3 v-7 M1039.5 62.6 v8 M1039.5 636.3 v-7 M1059.3 62.6 v8 M1059.3 636.3 v-7 M1079.2 62.6 v8 M1079.2 636.3 v-7 M1099 62.6 v13 M1118.8 62.6 v8 M1118.8 636.3 v-7 M1138.7 62.6 v8 M1138.7 636.3 v-7 M1158.5 62.6 v8 M1158.5 636.3 v-7 M1178.3 62.6 v8 M1178.3 636.3 v-7 M1198.2 62.6 v13 M1218 62.6 v8 M1218 636.3 v-7 M1237.8 62.6 v8 M1237.8 636.3 v-7 M1257.7 62.6 v8 M1257.7 636.3 v-7 M1277.5 62.6 v8 M1277.5 636.3 v-7 M1297.3 62.6 v13 M1317.2 62.6 v8 M1317.2 636.3 v-7 M1337 62.6 v8 M1337 636.3 v-7 M1356.8 62.6 v8 M1356.8 636.3 v-7 M1376.7 62.6 v8 M1376.7 636.3 v-7 M1396.5 62.6 v13 M1416.3 62.6 v8 M1416.3 636.3 v-7 M1436.2 62.6 v8 M1436.2 636.3 v-7 M725.6 613.5 h9 M1443.8 613.5 h-7 M725.6 589.9 h9 M1443.8 589.9 h-7 M725.6 566.4 h9 M1443.8 566.4 h-7 M725.6 542.8 h9 M1443.8 542.8 h-7 M725.6 519.3 h13 M1443.8 519.3 h-7 M725.6 495.8 h9 M1443.8 495.8 h-7 M725.6 472.2 h9 M1443.8 472.2 h-7 M725.6 448.7 h9 M1443.8 448.7 h-7 M725.6 425.1 h9 M1443.8 425.1 h-7 M725.6 401.6 h13 M1443.8 401.6 h-7 M725.6 378.1 h9 M1443.8 378.1 h-7 M725.6 354.5 h9 M1443.8 354.5 h-7 M725.6 331 h9 M1443.8 331 h-7 M725.6 307.4 h9 M1443.8 307.4 h-7 M725.6 283.9 h13 M1443.8 283.9 h-7 M725.6 260.4 h9 M1443.8 260.4 h-7 M725.6 236.8 h9 M1443.8 236.8 h-7 M725.6 213.3 h9 M1443.8 213.3 h-7 M725.6 189.7 h9 M1443.8 189.7 h-7 M725.6 166.2 h13 M1443.8 166.2 h-7 M725.6 142.7 h9 M1443.8 142.7 h-7 M725.6 119.1 h9 M1443.8 119.1 h-7 M725.6 95.6 h9 M1443.8 95.6 h-7 M725.6 72 h9 M1443.8 72 h-7" stroke="#a0a0a0" stroke-width="1.7" fill="none"/>
<text x="801" y="634.3" font-size="11.2" fill="#b4b4b4" text-anchor="middle" font-weight="400" opacity="0.85">-3 ps</text>
<text x="900.2" y="634.3" font-size="11.2" fill="#b4b4b4" text-anchor="middle" font-weight="400" opacity="0.85">-2 ps</text>
<text x="999.3" y="634.3" font-size="11.2" fill="#b4b4b4" text-anchor="middle" font-weight="400" opacity="0.85">-1 ps</text>
<text x="1098.5" y="634.3" font-size="11.2" fill="#b4b4b4" text-anchor="middle" font-weight="400" opacity="0.85">0 s</text>
<text x="1197.7" y="634.3" font-size="11.2" fill="#b4b4b4" text-anchor="middle" font-weight="400" opacity="0.85">1 ps</text>
<text x="1296.8" y="634.3" font-size="11.2" fill="#b4b4b4" text-anchor="middle" font-weight="400" opacity="0.85">2 ps</text>
<text x="1396" y="634.3" font-size="11.2" fill="#b4b4b4" text-anchor="middle" font-weight="400" opacity="0.85">3 ps</text>
<polyline points="1010,635.4 1012.2,635.2 1014.4,635 1016.6,634.7 1018.8,634.4 1021,634 1023.2,633.4 1025.4,632.2 1027.6,630.9 1029.8,631.6 1032,628.7 1034.2,628.9 1036.4,626.9 1038.6,624.1 1040.8,623.6 1043,619.8 1045.2,618.5 1047.4,614.4 1049.6,611.2 1051.8,608.7 1054,606.1 1056.2,599.6 1058.4,595.3 1060.6,591.7 1062.8,587.6 1065,581 1067.2,574.8 1069.4,570.9 1071.6,562.2 1073.8,559 1076,551.5 1078.2,545.5 1080.4,540.2 1082.6,535.9 1084.8,533.1 1087,527.1 1089.2,525 1091.4,522.4 1093.6,519.5 1095.8,518.7 1098,516.6 1100.2,516.8 1102.4,518.3 1104.6,521.5 1106.8,523.1 1109,525.9 1111.2,530.5 1113.4,534.3 1115.6,538.5 1117.8,545.2 1120,550.3 1122.2,554.5 1124.4,561.2 1126.6,566.9 1128.8,573.8 1131,578.9 1133.2,583 1135.4,590.5 1137.6,592.8 1139.8,598.5 1142,604 1144.2,606.1 1146.4,610.9 1148.6,612.9 1150.8,618 1153,621 1155.2,622.8 1157.4,625.9 1159.6,625.9 1161.8,628.8 1164,629.8 1166.2,630.9 1168.4,631.5 1170.6,633.6 1172.8,633.2 1175,633.7 1177.2,634.2 1179.4,634.6 1181.6,634.9 1183.8,635.1" stroke="#e53a2c" stroke-width="1.7" fill="none" stroke-linejoin="round"/>
<polyline points="960,636 964,634 966,628 968,636 972,634 976,634 981,617 984,628 988,636 992,613 996,620 1000,628 1003,622 1005,612 1008,626 1011,630 1014,616 1017,606 1020,614 1023,618 1025,595 1028,612 1031,617 1034,590 1036.5,565 1039,580 1041,577 1043.5,571 1046,585 1049,588 1052,587 1054,600 1057,612 1060,590 1062,584 1065,590 1068,592 1071,583 1074,596 1077,600 1080,578 1082,610 1084,617 1086,590 1089,563 1091,606 1094,605 1096.7,540 1099,575 1101,583 1103,577 1105,595 1108,590 1111,600 1114,588 1117,604 1120,607 1122,578 1125,600 1128,625 1131,590 1133.5,554 1136,600 1139,612 1142,575 1145.5,544 1148,580 1151,557 1154,590 1157,612 1160,618 1163,600 1167,584 1170,600 1172,608 1174,600 1177,592 1180,605 1183,604 1186,622 1189,630 1192,626 1195,614 1198,626 1201,634 1205,636 1209,634 1212,636 1216,632 1219,636 1223,634 1227,614 1231,634 1234,636" stroke="#f2ee4a" stroke-width="1.6" fill="none" stroke-linejoin="round"/>
<polyline points="1079,636.2 1083,635 1085.5,625 1087,600 1088,560 1089,480 1090,380 1091.5,270 1093,160 1094.6,85.5 1096,120 1097.3,165 1098.7,165 1099.6,134 1103.6,132.4 1104.8,250 1106.3,440 1107.5,520 1109.5,585 1112,620 1115,634 1120,636.2" stroke="#57b83f" stroke-width="1.7" fill="none" stroke-linejoin="round"/>
<polyline points="925,635.8 927.5,634.7 930,634.9 932.5,633.6 935,634.5 937.5,634.1 940,634.5 942.5,633.9 945,632.6 947.5,632.4 950,632.5 952.5,630.9 955,631.3 957.5,630.3 960,629.7 962.5,629 965,629.7 967.5,627.9 970,627.5 972.5,627 975,627.2 977.5,625 980,624.8 982.5,624.2 985,623.9 987.5,622.9 990,622 992.5,620 995,619.3 997.5,618.1 1000,618 1002.5,617.1 1005,614.6 1007.5,613.5 1010,612.5 1012.5,611.4 1015,610.7 1017.5,609.8 1020,608.1 1022.5,606.5 1025,606.1 1027.5,604.9 1030,604.2 1032.5,603.8 1035,602.3 1037.5,601 1040,600.2 1042.5,599.4 1045,597.3 1047.5,598 1050,596.9 1052.5,596.3 1055,595.4 1057.5,594 1060,593.3 1062.5,592.2 1065,592.6 1067.5,591 1070,590.6 1072.5,590.4 1075,590 1077.5,590 1080,589.2 1082.5,588.9 1085,589 1087.5,588.8 1090,589.2 1092.5,588.5 1095,590 1097.5,589.5 1100,588.7 1102.5,588.9 1105,589.1 1107.5,589.2 1110,588.9 1112.5,590.4 1115,590.8 1117.5,590.1 1120,590.4 1122.5,590.1 1125,590.5 1127.5,591.4 1130,591.7 1132.5,593.3 1135,592.6 1137.5,593 1140,595.4 1142.5,595.4 1145,595.4 1147.5,597 1150,596.9 1152.5,598.7 1155,600.5 1157.5,601.2 1160,601.9 1162.5,602.2 1165,603.4 1167.5,604.1 1170,606.3 1172.5,607 1175,608.6 1177.5,608.9 1180,609.8 1182.5,612 1185,613.4 1187.5,614.3 1190,615.3 1192.5,616.4 1195,617.4 1197.5,617.5 1200,619 1202.5,619.8 1205,620.1 1207.5,621.1 1210,622.5 1212.5,623.3 1215,624.9 1217.5,626.2 1220,626.1 1222.5,627.7 1225,628.5 1227.5,629.1 1230,628.7 1232.5,629.1 1235,629.6 1237.5,630.1 1240,630.6 1242.5,631.8 1245,632.8 1247.5,633.1 1250,632.8 1252.5,633.4 1255,634 1257.5,633 1260,634.3 1262.5,635 1265,635 1267.5,635.2 1270,634.8 1272.5,634.5 1275,635.7" stroke="#45b6e0" stroke-width="1.8" fill="none" stroke-linejoin="round"/>
<path d="M725.6 636.4 H1443.8" stroke="#4fa6c4" stroke-width="1.7" stroke-opacity="0.8"/><path d="M932 636.6 H1274" stroke="#3f8a30" stroke-width="1.6"/>
<rect x="1316.6" y="74.3" width="13.4" height="12.3" fill="#4fc4f7"/>
<text x="1339.6" y="84.9" font-size="11.4" fill="#f4f4f4" text-anchor="start" font-weight="700" letter-spacing="-0.25">TJ</text>
<rect x="1316.6" y="94.2" width="13.4" height="12.3" fill="#ee3a2a"/>
<text x="1339.6" y="104.8" font-size="11.4" fill="#f4f4f4" text-anchor="start" font-weight="700" letter-spacing="-0.25">RJ+NPJ</text>
<rect x="1316.6" y="114" width="13.4" height="12.3" fill="#5dc040"/>
<text x="1339.6" y="124.6" font-size="11.4" fill="#f4f4f4" text-anchor="start" font-weight="700" letter-spacing="-0.25">PJ</text>
<rect x="1316.6" y="133.8" width="13.4" height="12.3" fill="#fff24a"/>
<text x="1339.6" y="144.4" font-size="11.4" fill="#f4f4f4" text-anchor="start" font-weight="700" letter-spacing="-0.25">DDJ</text>
<path d="M1393 70.8 H1432 Q1435 70.8 1435 73.8 V112.8 Z" fill="#505050"/><circle cx="1426.2" cy="79.6" r="4.8" fill="none" stroke="#b0b0b0" stroke-width="1.7"/><line x1="1422.6" y1="83.8" x2="1414.4" y2="90.6" stroke="#b0b0b0" stroke-width="2.6" stroke-linecap="round"/>
</svg>
<svg class="plot" style="left:725.6px;top:675.1px" width="718.2" height="575" viewBox="725.6 675.1 718.2 575" font-family='"Liberation Sans", sans-serif' >
<line x1="742.9" y1="789.7" x2="1428.8" y2="789.7" stroke="#8a8a8a" stroke-width="1.5" stroke-dasharray="1.4 4.780"/><line x1="814.8" y1="789.7" x2="1357.8" y2="789.7" stroke="#a0a0a0" stroke-width="1.6" stroke-dasharray="1.6 88.430"/><line x1="742.9" y1="755" x2="1428.8" y2="755" stroke="#565656" stroke-width="1.5" stroke-dasharray="1.4 4.780"/><line x1="814.8" y1="755" x2="1357.8" y2="755" stroke="#a0a0a0" stroke-width="1.6" stroke-dasharray="1.6 88.430"/><line x1="742.9" y1="734.7" x2="1428.8" y2="734.7" stroke="#565656" stroke-width="1.5" stroke-dasharray="1.4 4.780"/><line x1="814.8" y1="734.7" x2="1357.8" y2="734.7" stroke="#a0a0a0" stroke-width="1.6" stroke-dasharray="1.6 88.430"/><line x1="742.9" y1="720.3" x2="1428.8" y2="720.3" stroke="#565656" stroke-width="1.5" stroke-dasharray="1.4 4.780"/><line x1="814.8" y1="720.3" x2="1357.8" y2="720.3" stroke="#a0a0a0" stroke-width="1.6" stroke-dasharray="1.6 88.430"/><line x1="742.9" y1="709.1" x2="1428.8" y2="709.1" stroke="#565656" stroke-width="1.5" stroke-dasharray="1.4 4.780"/><line x1="814.8" y1="709.1" x2="1357.8" y2="709.1" stroke="#a0a0a0" stroke-width="1.6" stroke-dasharray="1.6 88.430"/><line x1="742.9" y1="700" x2="1428.8" y2="700" stroke="#565656" stroke-width="1.5" stroke-dasharray="1.4 4.780"/><line x1="814.8" y1="700" x2="1357.8" y2="700" stroke="#a0a0a0" stroke-width="1.6" stroke-dasharray="1.6 88.430"/><line x1="742.9" y1="692.3" x2="1428.8" y2="692.3" stroke="#565656" stroke-width="1.5" stroke-dasharray="1.4 4.780"/><line x1="814.8" y1="692.3" x2="1357.8" y2="692.3" stroke="#a0a0a0" stroke-width="1.6" stroke-dasharray="1.6 88.430"/><line x1="742.9" y1="685.6" x2="1428.8" y2="685.6" stroke="#565656" stroke-width="1.5" stroke-dasharray="1.4 4.780"/><line x1="814.8" y1="685.6" x2="1357.8" y2="685.6" stroke="#a0a0a0" stroke-width="1.6" stroke-dasharray="1.6 88.430"/><line x1="742.9" y1="679.7" x2="1428.8" y2="679.7" stroke="#565656" stroke-width="1.5" stroke-dasharray="1.4 4.780"/><line x1="814.8" y1="679.7" x2="1357.8" y2="679.7" stroke="#a0a0a0" stroke-width="1.6" stroke-dasharray="1.6 88.430"/><line x1="742.9" y1="905" x2="1428.8" y2="905" stroke="#8a8a8a" stroke-width="1.5" stroke-dasharray="1.4 4.780"/><line x1="814.8" y1="905" x2="1357.8" y2="905" stroke="#a0a0a0" stroke-width="1.6" stroke-dasharray="1.6 88.430"/><line x1="742.9" y1="870.3" x2="1428.8" y2="870.3" stroke="#565656" stroke-width="1.5" stroke-dasharray="1.4 4.780"/><line x1="814.8" y1="870.3" x2="1357.8" y2="870.3" stroke="#a0a0a0" stroke-width="1.6" stroke-dasharray="1.6 88.430"/><line x1="742.9" y1="850" x2="1428.8" y2="850" stroke="#565656" stroke-width="1.5" stroke-dasharray="1.4 4.780"/><line x1="814.8" y1="850" x2="1357.8" y2="850" stroke="#a0a0a0" stroke-width="1.6" stroke-dasharray="1.6 88.430"/><line x1="742.9" y1="835.6" x2="1428.8" y2="835.6" stroke="#565656" stroke-width="1.5" stroke-dasharray="1.4 4.780"/><line x1="814.8" y1="835.6" x2="1357.8" y2="835.6" stroke="#a0a0a0" stroke-width="1.6" stroke-dasharray="1.6 88.430"/><line x1="742.9" y1="824.4" x2="1428.8" y2="824.4" stroke="#565656" stroke-width="1.5" stroke-dasharray="1.4 4.780"/><line x1="814.8" y1="824.4" x2="1357.8" y2="824.4" stroke="#a0a0a0" stroke-width="1.6" stroke-dasharray="1.6 88.430"/><line x1="742.9" y1="815.3" x2="1428.8" y2="815.3" stroke="#565656" stroke-width="1.5" stroke-dasharray="1.4 4.780"/><line x1="814.8" y1="815.3" x2="1357.8" y2="815.3" stroke="#a0a0a0" stroke-width="1.6" stroke-dasharray="1.6 88.430"/><line x1="742.9" y1="807.6" x2="1428.8" y2="807.6" stroke="#565656" stroke-width="1.5" stroke-dasharray="1.4 4.780"/><line x1="814.8" y1="807.6" x2="1357.8" y2="807.6" stroke="#a0a0a0" stroke-width="1.6" stroke-dasharray="1.6 88.430"/><line x1="742.9" y1="800.9" x2="1428.8" y2="800.9" stroke="#565656" stroke-width="1.5" stroke-dasharray="1.4 4.780"/><line x1="814.8" y1="800.9" x2="1357.8" y2="800.9" stroke="#a0a0a0" stroke-width="1.6" stroke-dasharray="1.6 88.430"/><line x1="742.9" y1="795" x2="1428.8" y2="795" stroke="#565656" stroke-width="1.5" stroke-dasharray="1.4 4.780"/><line x1="814.8" y1="795" x2="1357.8" y2="795" stroke="#a0a0a0" stroke-width="1.6" stroke-dasharray="1.6 88.430"/><line x1="742.9" y1="1020.3" x2="1428.8" y2="1020.3" stroke="#8a8a8a" stroke-width="1.5" stroke-dasharray="1.4 4.780"/><line x1="814.8" y1="1020.3" x2="1357.8" y2="1020.3" stroke="#a0a0a0" stroke-width="1.6" stroke-dasharray="1.6 88.430"/><line x1="742.9" y1="985.6" x2="1428.8" y2="985.6" stroke="#565656" stroke-width="1.5" stroke-dasharray="1.4 4.780"/><line x1="814.8" y1="985.6" x2="1357.8" y2="985.6" stroke="#a0a0a0" stroke-width="1.6" stroke-dasharray="1.6 88.430"/><line x1="742.9" y1="965.3" x2="1428.8" y2="965.3" stroke="#565656" stroke-width="1.5" stroke-dasharray="1.4 4.780"/><line x1="814.8" y1="965.3" x2="1357.8" y2="965.3" stroke="#a0a0a0" stroke-width="1.6" stroke-dasharray="1.6 88.430"/><line x1="742.9" y1="950.9" x2="1428.8" y2="950.9" stroke="#565656" stroke-width="1.5" stroke-dasharray="1.4 4.780"/><line x1="814.8" y1="950.9" x2="1357.8" y2="950.9" stroke="#a0a0a0" stroke-width="1.6" stroke-dasharray="1.6 88.430"/><line x1="742.9" y1="939.7" x2="1428.8" y2="939.7" stroke="#565656" stroke-width="1.5" stroke-dasharray="1.4 4.780"/><line x1="814.8" y1="939.7" x2="1357.8" y2="939.7" stroke="#a0a0a0" stroke-width="1.6" stroke-dasharray="1.6 88.430"/><line x1="742.9" y1="930.6" x2="1428.8" y2="930.6" stroke="#565656" stroke-width="1.5" stroke-dasharray="1.4 4.780"/><line x1="814.8" y1="930.6" x2="1357.8" y2="930.6" stroke="#a0a0a0" stroke-width="1.6" stroke-dasharray="1.6 88.430"/><line x1="742.9" y1="922.9" x2="1428.8" y2="922.9" stroke="#565656" stroke-width="1.5" stroke-dasharray="1.4 4.780"/><line x1="814.8" y1="922.9" x2="1357.8" y2="922.9" stroke="#a0a0a0" stroke-width="1.6" stroke-dasharray="1.6 88.430"/><line x1="742.9" y1="916.2" x2="1428.8" y2="916.2" stroke="#565656" stroke-width="1.5" stroke-dasharray="1.4 4.780"/><line x1="814.8" y1="916.2" x2="1357.8" y2="916.2" stroke="#a0a0a0" stroke-width="1.6" stroke-dasharray="1.6 88.430"/><line x1="742.9" y1="910.3" x2="1428.8" y2="910.3" stroke="#565656" stroke-width="1.5" stroke-dasharray="1.4 4.780"/><line x1="814.8" y1="910.3" x2="1357.8" y2="910.3" stroke="#a0a0a0" stroke-width="1.6" stroke-dasharray="1.6 88.430"/><line x1="742.9" y1="1135.6" x2="1428.8" y2="1135.6" stroke="#8a8a8a" stroke-width="1.5" stroke-dasharray="1.4 4.780"/><line x1="814.8" y1="1135.6" x2="1357.8" y2="1135.6" stroke="#a0a0a0" stroke-width="1.6" stroke-dasharray="1.6 88.430"/><line x1="742.9" y1="1100.9" x2="1428.8" y2="1100.9" stroke="#565656" stroke-width="1.5" stroke-dasharray="1.4 4.780"/><line x1="814.8" y1="1100.9" x2="1357.8" y2="1100.9" stroke="#a0a0a0" stroke-width="1.6" stroke-dasharray="1.6 88.430"/><line x1="742.9" y1="1080.6" x2="1428.8" y2="1080.6" stroke="#565656" stroke-width="1.5" stroke-dasharray="1.4 4.780"/><line x1="814.8" y1="1080.6" x2="1357.8" y2="1080.6" stroke="#a0a0a0" stroke-width="1.6" stroke-dasharray="1.6 88.430"/><line x1="742.9" y1="1066.2" x2="1428.8" y2="1066.2" stroke="#565656" stroke-width="1.5" stroke-dasharray="1.4 4.780"/><line x1="814.8" y1="1066.2" x2="1357.8" y2="1066.2" stroke="#a0a0a0" stroke-width="1.6" stroke-dasharray="1.6 88.430"/><line x1="742.9" y1="1055" x2="1428.8" y2="1055" stroke="#565656" stroke-width="1.5" stroke-dasharray="1.4 4.780"/><line x1="814.8" y1="1055" x2="1357.8" y2="1055" stroke="#a0a0a0" stroke-width="1.6" stroke-dasharray="1.6 88.430"/><line x1="742.9" y1="1045.9" x2="1428.8" y2="1045.9" stroke="#565656" stroke-width="1.5" stroke-dasharray="1.4 4.780"/><line x1="814.8" y1="1045.9" x2="1357.8" y2="1045.9" stroke="#a0a0a0" stroke-width="1.6" stroke-dasharray="1.6 88.430"/><line x1="742.9" y1="1038.2" x2="1428.8" y2="1038.2" stroke="#565656" stroke-width="1.5" stroke-dasharray="1.4 4.780"/><line x1="814.8" y1="1038.2" x2="1357.8" y2="1038.2" stroke="#a0a0a0" stroke-width="1.6" stroke-dasharray="1.6 88.430"/><line x1="742.9" y1="1031.5" x2="1428.8" y2="1031.5" stroke="#565656" stroke-width="1.5" stroke-dasharray="1.4 4.780"/><line x1="814.8" y1="1031.5" x2="1357.8" y2="1031.5" stroke="#a0a0a0" stroke-width="1.6" stroke-dasharray="1.6 88.430"/><line x1="742.9" y1="1025.6" x2="1428.8" y2="1025.6" stroke="#565656" stroke-width="1.5" stroke-dasharray="1.4 4.780"/><line x1="814.8" y1="1025.6" x2="1357.8" y2="1025.6" stroke="#a0a0a0" stroke-width="1.6" stroke-dasharray="1.6 88.430"/><line x1="742.9" y1="1216.2" x2="1428.8" y2="1216.2" stroke="#565656" stroke-width="1.5" stroke-dasharray="1.4 4.780"/><line x1="814.8" y1="1216.2" x2="1357.8" y2="1216.2" stroke="#a0a0a0" stroke-width="1.6" stroke-dasharray="1.6 88.430"/><line x1="742.9" y1="1195.9" x2="1428.8" y2="1195.9" stroke="#565656" stroke-width="1.5" stroke-dasharray="1.4 4.780"/><line x1="814.8" y1="1195.9" x2="1357.8" y2="1195.9" stroke="#a0a0a0" stroke-width="1.6" stroke-dasharray="1.6 88.430"/><line x1="742.9" y1="1181.5" x2="1428.8" y2="1181.5" stroke="#565656" stroke-width="1.5" stroke-dasharray="1.4 4.780"/><line x1="814.8" y1="1181.5" x2="1357.8" y2="1181.5" stroke="#a0a0a0" stroke-width="1.6" stroke-dasharray="1.6 88.430"/><line x1="742.9" y1="1170.3" x2="1428.8" y2="1170.3" stroke="#565656" stroke-width="1.5" stroke-dasharray="1.4 4.780"/><line x1="814.8" y1="1170.3" x2="1357.8" y2="1170.3" stroke="#a0a0a0" stroke-width="1.6" stroke-dasharray="1.6 88.430"/><line x1="742.9" y1="1161.2" x2="1428.8" y2="1161.2" stroke="#565656" stroke-width="1.5" stroke-dasharray="1.4 4.780"/><line x1="814.8" y1="1161.2" x2="1357.8" y2="1161.2" stroke="#a0a0a0" stroke-width="1.6" stroke-dasharray="1.6 88.430"/><line x1="742.9" y1="1153.5" x2="1428.8" y2="1153.5" stroke="#565656" stroke-width="1.5" stroke-dasharray="1.4 4.780"/><line x1="814.8" y1="1153.5" x2="1357.8" y2="1153.5" stroke="#a0a0a0" stroke-width="1.6" stroke-dasharray="1.6 88.430"/><line x1="742.9" y1="1146.8" x2="1428.8" y2="1146.8" stroke="#565656" stroke-width="1.5" stroke-dasharray="1.4 4.780"/><line x1="814.8" y1="1146.8" x2="1357.8" y2="1146.8" stroke="#a0a0a0" stroke-width="1.6" stroke-dasharray="1.6 88.430"/><line x1="742.9" y1="1140.9" x2="1428.8" y2="1140.9" stroke="#565656" stroke-width="1.5" stroke-dasharray="1.4 4.780"/><line x1="814.8" y1="1140.9" x2="1357.8" y2="1140.9" stroke="#a0a0a0" stroke-width="1.6" stroke-dasharray="1.6 88.430"/>
<path d="M725.6 789.7 h13 M1443.8 789.7 h-7 M725.6 755 h9 M1443.8 755 h-7 M725.6 734.7 h9 M1443.8 734.7 h-7 M725.6 720.3 h9 M1443.8 720.3 h-7 M725.6 709.1 h9 M1443.8 709.1 h-7 M725.6 700 h9 M1443.8 700 h-7 M725.6 692.3 h9 M1443.8 692.3 h-7 M725.6 685.6 h9 M1443.8 685.6 h-7 M725.6 679.7 h9 M1443.8 679.7 h-7 M725.6 905 h13 M1443.8 905 h-7 M725.6 870.3 h9 M1443.8 870.3 h-7 M725.6 850 h9 M1443.8 850 h-7 M725.6 835.6 h9 M1443.8 835.6 h-7 M725.6 824.4 h9 M1443.8 824.4 h-7 M725.6 815.3 h9 M1443.8 815.3 h-7 M725.6 807.6 h9 M1443.8 807.6 h-7 M725.6 800.9 h9 M1443.8 800.9 h-7 M725.6 795 h9 M1443.8 795 h-7 M725.6 1020.3 h13 M1443.8 1020.3 h-7 M725.6 985.6 h9 M1443.8 985.6 h-7 M725.6 965.3 h9 M1443.8 965.3 h-7 M725.6 950.9 h9 M1443.8 950.9 h-7 M725.6 939.7 h9 M1443.8 939.7 h-7 M725.6 930.6 h9 M1443.8 930.6 h-7 M725.6 922.9 h9 M1443.8 922.9 h-7 M725.6 916.2 h9 M1443.8 916.2 h-7 M725.6 910.3 h9 M1443.8 910.3 h-7 M725.6 1135.6 h13 M1443.8 1135.6 h-7 M725.6 1100.9 h9 M1443.8 1100.9 h-7 M725.6 1080.6 h9 M1443.8 1080.6 h-7 M725.6 1066.2 h9 M1443.8 1066.2 h-7 M725.6 1055 h9 M1443.8 1055 h-7 M725.6 1045.9 h9 M1443.8 1045.9 h-7 M725.6 1038.2 h9 M1443.8 1038.2 h-7 M725.6 1031.5 h9 M1443.8 1031.5 h-7 M725.6 1025.6 h9 M1443.8 1025.6 h-7 M725.6 1216.2 h9 M1443.8 1216.2 h-7 M725.6 1195.9 h9 M1443.8 1195.9 h-7 M725.6 1181.5 h9 M1443.8 1181.5 h-7 M725.6 1170.3 h9 M1443.8 1170.3 h-7 M725.6 1161.2 h9 M1443.8 1161.2 h-7 M725.6 1153.5 h9 M1443.8 1153.5 h-7 M725.6 1146.8 h9 M1443.8 1146.8 h-7 M725.6 1140.9 h9 M1443.8 1140.9 h-7 M743.6 675.1 v8 M743.6 1250.1 v-7 M761.6 675.1 v8 M761.6 1250.1 v-7 M779.6 675.1 v8 M779.6 1250.1 v-7 M797.6 675.1 v8 M797.6 1250.1 v-7 M815.6 675.1 v13 M833.6 675.1 v8 M833.6 1250.1 v-7 M851.6 675.1 v8 M851.6 1250.1 v-7 M869.6 675.1 v8 M869.6 1250.1 v-7 M887.7 675.1 v8 M887.7 1250.1 v-7 M905.7 675.1 v13 M923.7 675.1 v8 M923.7 1250.1 v-7 M941.7 675.1 v8 M941.7 1250.1 v-7 M959.7 675.1 v8 M959.7 1250.1 v-7 M977.7 675.1 v8 M977.7 1250.1 v-7 M995.7 675.1 v13 M1013.7 675.1 v8 M1013.7 1250.1 v-7 M1031.7 675.1 v8 M1031.7 1250.1 v-7 M1049.7 675.1 v8 M1049.7 1250.1 v-7 M1067.7 675.1 v8 M1067.7 1250.1 v-7 M1085.7 675.1 v13 M1103.7 675.1 v8 M1103.7 1250.1 v-7 M1121.7 675.1 v8 M1121.7 1250.1 v-7 M1139.7 675.1 v8 M1139.7 1250.1 v-7 M1157.7 675.1 v8 M1157.7 1250.1 v-7 M1175.8 675.1 v13 M1193.8 675.1 v8 M1193.8 1250.1 v-7 M1211.8 675.1 v8 M1211.8 1250.1 v-7 M1229.8 675.1 v8 M1229.8 1250.1 v-7 M1247.8 675.1 v8 M1247.8 1250.1 v-7 M1265.8 675.1 v13 M1283.8 675.1 v8 M1283.8 1250.1 v-7 M1301.8 675.1 v8 M1301.8 1250.1 v-7 M1319.8 675.1 v8 M1319.8 1250.1 v-7 M1337.8 675.1 v8 M1337.8 1250.1 v-7 M1355.8 675.1 v13 M1373.8 675.1 v8 M1373.8 1250.1 v-7 M1391.8 675.1 v8 M1391.8 1250.1 v-7 M1409.8 675.1 v8 M1409.8 1250.1 v-7 M1427.8 675.1 v8 M1427.8 1250.1 v-7" stroke="#a0a0a0" stroke-width="1.7" fill="none"/>
<polyline points="725.8,1000 725.9,769 726.8,930 729.4,997 730.4,841 731.3,945 732.2,981 733.2,865 734.1,966 735.1,974 736.0,850 736.9,1000 737.9,996 738.8,870 739.8,945 740.7,987 741.6,843 742.6,942 743.5,969 744.5,902 745.4,949 746.3,999 747.3,860 748.2,966 749.2,1004 750.1,855 751.0,961 752.0,961 752.9,867 753.9,961 754.8,961 755.7,852 756.7,934 757.6,925 758.6,826 759.5,997 760.4,1014 761.4,867 762.3,999 763.3,948 764.2,832 765.1,985 766.1,965 767.0,825 768.0,964 768.9,978 769.8,836 770.8,974 771.7,963 772.7,845 773.6,1013 774.5,985 775.5,882 776.4,977 777.4,994 778.3,893 779.2,1014 780.2,1023 781.1,892 782.1,956 783.0,940 783.9,890 784.9,960 785.8,931 786.8,857 787.7,1005 788.6,991 789.6,874 790.5,967 791.5,993 792.4,861 793.3,962 794.3,933 795.2,891 796.2,943 797.1,976 798.0,825 799.0,942 799.9,971 800.9,863 801.8,984 802.7,997 803.7,838 804.6,990 805.6,976 806.5,892 807.4,934 808.4,977 809.3,886 810.3,1129 811.2,984 812.1,899 813.1,1031 814.0,993 815.0,892 815.9,980 816.8,971 817.8,858 818.7,935 819.7,1013 820.6,904 821.5,948 822.5,952 823.4,889 824.4,946 825.3,945 826.2,843 827.2,984 828.1,973 829.1,883 830.0,953 830.9,949 831.9,832 832.8,962 833.8,1010 834.7,833 835.6,945 836.6,987 837.5,854 838.5,958 839.4,948 840.3,831 841.3,968 842.2,954 843.2,866 844.1,947 845.0,959 846.0,852 846.9,988 847.9,924 848.8,860 849.7,928 850.7,990 851.6,826 852.6,965 853.5,930 854.4,858 855.4,959 856.3,975 857.3,890 858.2,1011 859.1,989 860.1,900 861.0,956 862.0,969 862.9,848 863.8,929 864.8,981 865.7,887 866.7,963 867.6,1005 868.5,895 869.5,954 870.4,965 871.4,853 872.3,987 873.2,974 874.2,881 875.1,1046 876.1,953 877.0,887 877.9,973 878.9,981 879.8,892 880.8,1020 881.7,1014 882.6,899 883.6,938 884.5,1015 885.5,905 886.4,1009 887.3,987 888.3,887 889.2,990 890.2,1042 891.1,893 892.0,984 893.0,968 893.9,898 894.9,999 895.8,972 896.7,902 897.7,994 898.6,1148 899.6,857 900.5,955 901.4,1028 902.4,881 903.3,990 904.3,980 905.2,913 906.1,1017 907.1,1013 908.0,908 909.0,1033 909.9,1041 910.8,881 911.8,981 912.7,992 913.7,843 914.6,1013 915.5,1010 916.5,880 917.4,980 918.4,979 919.3,846 920.2,999 921.2,981 922.1,862 923.1,1023 924.0,977 924.9,902 925.9,962 926.8,997 927.8,887 928.7,962 929.6,1023 930.6,852 931.5,1009 932.5,972 933.4,853 934.3,1013 935.3,986 936.2,923 937.2,1017 938.1,1036 939.0,901 940.0,1044 940.9,1018 941.9,868 942.8,1008 943.7,1015 944.7,899 945.6,1075 946.6,984 947.5,917 948.4,988 949.4,974 950.3,853 951.3,1022 952.2,1020 953.1,918 954.1,968 955.0,1076 956.0,852 956.9,1012 957.8,1004 958.8,857 959.7,984 960.7,984 961.6,895 962.5,980 963.5,983 964.4,900 965.4,956 966.3,970 967.2,910 968.2,1000 969.1,1020 970.1,883 971.0,970 971.9,981 972.9,890 973.8,1007 974.8,1018 975.7,895 976.6,1011 977.6,1004 978.5,898 979.5,989 980.4,1002 981.3,858 982.3,1016 983.2,1038 984.2,876 985.1,1017 986.0,1027 987.0,867 987.9,1001 988.9,1033 989.8,909 990.7,1003 991.7,1099 992.6,898 993.6,1032 994.5,989 995.4,915 996.4,1004 997.3,1037 998.3,871 999.2,968 1000.1,1021 1001.1,889 1002.0,951 1003.0,987 1003.9,883 1004.8,1007 1005.8,974 1006.7,913 1007.7,992 1008.6,994 1009.5,888 1010.5,1001 1011.4,971 1012.4,862 1013.3,1033 1014.2,969 1015.2,873 1016.1,1002 1017.1,990 1018.0,912 1018.9,993 1019.9,1041 1020.8,900 1021.8,1035 1022.7,1000 1023.6,888 1024.6,1079 1025.5,1008 1026.5,887 1027.4,1007 1028.3,1020 1029.3,880 1030.2,1012 1031.2,992 1032.1,894 1033.0,1049 1034.0,1018 1034.9,876 1035.9,1062 1036.8,1015 1037.7,918 1038.7,1041 1039.6,985 1040.6,868 1041.5,970 1042.4,976 1043.4,907 1044.3,1020 1045.3,991 1046.2,902 1047.1,1048 1048.1,1034 1049.0,901 1050.0,1037 1050.9,1040 1051.8,860 1052.8,991 1053.7,1004 1054.7,899 1055.6,984 1056.5,1051 1057.5,895 1058.4,1031 1059.4,1026 1060.3,871 1061.2,1075 1062.2,998 1063.1,860 1064.1,1011 1065.0,1088 1065.9,920 1066.9,990 1067.8,1055 1068.8,919 1069.7,1063 1070.6,1016 1071.6,889 1072.5,1055 1073.5,984 1074.4,919 1075.3,992 1076.3,1037 1077.2,924 1078.2,1005 1079.1,1018 1080.0,907 1081.0,1076 1081.9,1034 1082.9,916 1083.8,980 1084.7,1049 1085.7,888 1086.6,997 1087.6,1034 1088.5,925 1089.4,1125 1090.4,993 1091.3,872 1092.3,1037 1093.2,1079 1094.1,900 1095.1,1001 1096.0,1029 1097.0,860 1097.9,1027 1098.8,1028 1099.8,840 1100.7,966 1101.7,989 1102.6,887 1103.5,977 1104.5,995 1105.4,841 1106.4,980 1107.3,1008 1108.2,887 1109.2,992 1110.1,1038 1111.1,911 1112.0,1044 1112.9,1079 1113.9,873 1114.8,998 1115.8,1026 1116.7,865 1117.6,992 1118.6,986 1119.5,909 1120.5,1084 1121.4,1011 1122.3,864 1123.3,1059 1124.2,1000 1125.2,887 1126.1,1037 1127.0,1033 1128.0,854 1128.9,1088 1129.9,1023 1130.8,893 1131.7,1012 1132.7,1060 1133.6,866 1134.6,1004 1135.5,979 1136.4,893 1137.4,1051 1138.3,998 1139.3,907 1140.2,1008 1141.1,1023 1142.1,922 1143.0,1013 1144.0,1038 1144.9,899 1145.8,996 1146.8,1097 1147.7,864 1148.7,1034 1149.6,1030 1150.5,891 1151.5,1036 1152.4,1035 1153.4,880 1154.3,1057 1155.2,1019 1156.2,919 1157.1,1053 1158.1,1040 1159.0,915 1159.9,1040 1160.9,1049 1161.8,900 1162.8,1066 1163.7,985 1164.6,858 1165.6,1011 1166.5,1016 1167.5,920 1168.4,1032 1169.3,1006 1170.3,881 1171.2,1056 1172.2,1004 1173.1,856 1174.0,1022 1175.0,1037 1175.9,860 1176.9,985 1177.8,1012 1178.7,885 1179.7,990 1180.6,996 1181.6,880 1182.5,1001 1183.4,974 1184.4,896 1185.3,1011 1186.3,967 1187.2,900 1188.1,978 1189.1,1007 1190.0,874 1191.0,986 1191.9,1009 1192.8,890 1193.8,1017 1194.7,965 1195.7,877 1196.6,1015 1197.5,1016 1198.5,890 1199.4,992 1200.4,1035 1201.3,854 1202.2,993 1203.2,992 1204.1,871 1205.1,972 1206.0,987 1206.9,853 1207.9,1049 1208.8,992 1209.8,892 1210.7,1036 1211.6,1139 1212.6,864 1213.5,1019 1214.5,1025 1215.4,890 1216.3,990 1217.3,990 1218.2,864 1219.2,1108 1220.1,1111 1221.0,904 1222.0,1057 1222.9,1035 1223.9,914 1224.8,1000 1225.7,1020 1226.7,862 1227.6,1001 1228.6,1024 1229.5,874 1230.4,1050 1231.4,1051 1232.3,923 1233.3,1066 1234.2,1028 1235.1,848 1236.1,1017 1237.0,1005 1238.0,842 1238.9,1020 1239.8,1020 1240.8,863 1241.7,1036 1242.7,1005 1243.6,890 1244.5,1013 1245.5,1035 1246.4,880 1247.4,1033 1248.3,1014 1249.2,903 1250.2,1057 1251.1,1023 1252.1,873 1253.0,1027 1253.9,1025 1254.9,878 1255.8,1031 1256.8,1140 1257.7,917 1258.6,1014 1259.6,1001 1260.5,880 1261.5,1021 1262.4,1016 1263.3,888 1264.3,1092 1265.2,1010 1266.2,899 1267.1,1010 1268.0,1043 1269.0,892 1269.9,992 1270.9,1083 1271.8,912 1272.7,1022 1273.7,1115 1274.6,894 1275.6,1036 1276.5,1038 1277.4,913 1278.4,1120 1279.3,1077 1280.3,865 1281.2,1122 1282.1,1025 1283.1,902 1284.0,1029 1285.0,1091 1285.9,891 1286.8,1057 1287.8,1000 1288.7,929 1289.7,1016 1290.6,1024 1291.5,921 1292.5,1049 1293.4,1035 1294.4,918 1295.3,1048 1296.2,1042 1297.2,898 1298.1,1033 1299.1,1052 1300.0,884 1300.9,1057 1301.9,1016 1302.8,885 1303.8,1040 1304.7,1022 1305.6,865 1306.6,1161 1307.5,1022 1308.5,864 1309.4,1013 1310.3,1010 1311.3,866 1312.2,1022 1313.2,1082 1314.1,887 1315.0,1003 1316.0,1062 1316.9,895 1317.9,1055 1318.8,1039 1319.7,916 1320.7,1028 1321.6,1002 1322.6,890 1323.5,1059 1324.4,1020 1325.4,899 1326.3,1065 1327.3,1095 1328.2,919 1329.1,1018 1330.1,1050 1331.0,894 1332.0,1048 1332.9,1042 1333.8,904 1334.8,1031 1335.7,1071 1336.7,932 1337.6,1104 1338.5,1044 1339.5,871 1340.4,1099 1341.4,1083 1342.3,865 1343.2,1004 1344.2,1029 1345.1,915 1346.1,992 1347.0,1059 1347.9,904 1348.9,1104 1349.8,1023 1350.8,857 1351.7,1021 1352.6,1057 1353.6,887 1354.5,1062 1355.5,1081 1356.4,913 1357.3,1031 1358.3,1073 1359.2,931 1360.2,1022 1361.1,1025 1362.0,934 1363.0,1032 1363.9,1066 1364.9,881 1365.8,1074 1366.7,1105 1367.7,926 1368.6,1065 1369.6,1064 1370.5,874 1371.4,1061 1372.4,1020 1373.3,937 1374.3,1047 1375.2,1075 1376.1,929 1377.1,1002 1378.0,1029 1379.0,869 1379.9,1079 1380.8,1042 1381.8,924 1382.7,1065 1383.7,1093 1384.6,931 1385.5,1097 1386.5,1050 1387.4,936 1388.4,1082 1389.3,1087 1390.2,887 1391.2,1082 1392.1,1067 1393.1,877 1394.0,1033 1394.9,1063 1395.9,918 1396.8,1085 1397.8,1078 1398.7,944 1399.6,1070 1400.6,1074 1401.5,902 1402.5,1042 1403.4,1074 1404.3,880 1405.3,1070 1406.2,1068 1407.2,884 1408.1,1096 1409.0,1047 1410.0,950 1410.9,1150 1411.9,1060 1412.8,898 1413.7,1036 1414.7,1099 1415.6,909 1416.6,1068 1417.5,1096 1418.4,930 1419.4,1039 1420.3,1023 1421.3,916 1422.2,1070 1423.1,1025 1424.1,925 1425.0,1063 1426.0,1031 1426.9,886 1427.8,1026 1428.8,1030 1429.7,901 1430.7,1064 1431.6,1068 1432.5,948 1433.5,1038 1434.4,1062 1435.4,877 1436.3,1086 1437.2,1064 1438.2,881 1439.1,1069 1440.1,1030 1441.0,901 1441.9,1062" stroke="#d963dd" stroke-width="1.85" fill="none" stroke-linejoin="bevel"/>
<text x="1440.8" y="793.8" font-size="11.2" fill="#b4b4b4" text-anchor="end" font-weight="400" opacity="0.9">100 fs</text>
<text x="1440.8" y="909.1" font-size="11.2" fill="#b4b4b4" text-anchor="end" font-weight="400" opacity="0.9">10 fs</text>
<text x="1440.8" y="1024.4" font-size="11.2" fill="#b4b4b4" text-anchor="end" font-weight="400" opacity="0.9">1 fs</text>
<text x="1440.8" y="1139.7" font-size="11.2" fill="#b4b4b4" text-anchor="end" font-weight="400" opacity="0.9">0 s</text>
<text x="816.1" y="1247.4" font-size="11.3" fill="#b4b4b4" text-anchor="middle" font-weight="400" opacity="0.9">1 GHz</text>
<text x="906.2" y="1247.4" font-size="11.3" fill="#b4b4b4" text-anchor="middle" font-weight="400" opacity="0.9">2 GHz</text>
<text x="996.2" y="1247.4" font-size="11.3" fill="#b4b4b4" text-anchor="middle" font-weight="400" opacity="0.9">3 GHz</text>
<text x="1086.2" y="1247.4" font-size="11.3" fill="#b4b4b4" text-anchor="middle" font-weight="400" opacity="0.9">4 GHz</text>
<text x="1176.2" y="1247.4" font-size="11.3" fill="#b4b4b4" text-anchor="middle" font-weight="400" opacity="0.9">5 GHz</text>
<text x="1266.3" y="1247.4" font-size="11.3" fill="#b4b4b4" text-anchor="middle" font-weight="400" opacity="0.9">6 GHz</text>
<text x="1356.3" y="1247.4" font-size="11.3" fill="#b4b4b4" text-anchor="middle" font-weight="400" opacity="0.9">7 GHz</text>
<path d="M1393 683.3 H1432 Q1435 683.3 1435 686.3 V725.3 Z" fill="#505050"/><circle cx="1426.2" cy="692.1" r="4.8" fill="none" stroke="#b0b0b0" stroke-width="1.7"/><line x1="1422.6" y1="696.3" x2="1414.4" y2="703.1" stroke="#b0b0b0" stroke-width="2.6" stroke-linecap="round"/>
</svg>
<svg class="plot" style="left:1449.6px;top:62.6px" width="718.2" height="575.2" viewBox="1449.6 62.6 718.2 575.2" font-family='"Liberation Sans", sans-serif' >
<defs><filter id="eyef" filterUnits="userSpaceOnUse" x="1380" y="0" width="860" height="700" color-interpolation-filters="sRGB">
<feGaussianBlur stdDeviation="3 9" result="b"/>
<feComponentTransfer in="b" result="g"><feFuncR type="gamma" amplitude="1" exponent="0.5" offset="0"/><feFuncG type="gamma" amplitude="1" exponent="0.5" offset="0"/><feFuncB type="gamma" amplitude="1" exponent="0.5" offset="0"/></feComponentTransfer>
<feComponentTransfer in="g"><feFuncR type="table" tableValues="0 0 0 0 0 0 0 0 0 0 0 0 0 0 0 0 0.02 0.0867 0.3 0.55 0.674 0.767 0.86 0.953 1 1 1 1 1 1 1 1 1 1 1 1 1 1 1 1 1 0.997 0.993 0.99 0.987 0.983 0.98 0.979 0.977 0.976 0.974 0.973 0.971 0.97 0.968 0.967 0.965 0.964 0.964 0.963 0.963 0.962 0.961 0.961 0.96 0.959 0.957 0.956 0.955 0.954 0.953 0.951 0.95 0.949 0.947 0.946 0.944 0.943 0.941 0.94 0.938 0.936 0.935 0.935 0.934 0.934 0.934 0.934 0.933 0.933 0.933 0.932 0.932 0.932 0.932 0.931 0.931 0.931 0.931 0.93 0.93"/><feFuncG type="table" tableValues="0 0 0 0 0 0 0 0 0 0 0 0.0119 0.0238 0.0357 0.0476 0.503 0.92 0.987 1 1 1 1 1 1 0.994 0.982 0.971 0.959 0.947 0.935 0.924 0.912 0.9 0.881 0.863 0.844 0.825 0.806 0.788 0.769 0.75 0.73 0.71 0.69 0.67 0.65 0.63 0.62 0.61 0.6 0.59 0.58 0.57 0.56 0.55 0.54 0.53 0.523 0.515 0.508 0.5 0.493 0.485 0.477 0.47 0.459 0.447 0.436 0.425 0.414 0.403 0.391 0.38 0.37 0.36 0.35 0.34 0.33 0.32 0.31 0.3 0.29 0.28 0.278 0.276 0.273 0.271 0.269 0.267 0.264 0.262 0.26 0.258 0.256 0.253 0.251 0.249 0.247 0.244 0.242 0.24"/><feFuncB type="table" tableValues="0 0 0 0 0 0 0 0 0 0.444 1 1 1 1 1 1 0.89 0.523 0.31 0.135 0.0907 0.0791 0.0674 0.0558 0.0529 0.0588 0.0647 0.0706 0.0765 0.0824 0.0882 0.0941 0.1 0.104 0.108 0.111 0.115 0.119 0.122 0.126 0.13 0.133 0.137 0.14 0.143 0.147 0.15 0.151 0.152 0.153 0.154 0.155 0.156 0.157 0.158 0.159 0.16 0.159 0.158 0.156 0.155 0.154 0.152 0.151 0.15 0.149 0.147 0.146 0.145 0.144 0.143 0.141 0.14 0.139 0.138 0.137 0.136 0.135 0.134 0.133 0.132 0.131 0.13 0.13 0.13 0.13 0.13 0.13 0.13 0.13 0.13 0.13 0.13 0.13 0.13 0.13 0.13 0.13 0.13 0.13 0.13"/></feComponentTransfer>
</filter></defs>
<g filter="url(#eyef)"><rect x="1380" y="0" width="860" height="700" fill="#000"/><polyline points="1380.0,140.6 1386.0,140.1 1392.0,139.6 1398.0,139.0 1404.0,138.3 1410.0,137.7 1416.0,137.1 1422.0,136.6 1428.0,136.1 1434.0,135.8 1440.0,135.5 1446.0,135.4 1452.0,135.5 1458.0,135.6 1464.0,135.9 1470.0,136.3 1476.0,136.8 1482.0,137.4 1488.0,138.0 1494.0,138.6 1500.0,139.3 1506.0,139.9 1512.0,140.4 1518.0,140.8 1524.0,141.2 1530.0,141.5 1536.0,141.7 1542.0,141.8 1548.0,141.8 1554.0,141.7 1560.0,141.5 1566.0,141.3 1572.0,141.0 1578.0,140.6 1584.0,140.3 1590.0,139.9 1596.0,139.5 1602.0,139.2 1608.0,138.9 1614.0,138.7 1620.0,138.5 1626.0,138.4 1632.0,138.4 1638.0,138.5 1644.0,138.6 1650.0,138.8 1656.0,139.1 1662.0,139.4 1668.0,139.7 1674.0,140.1 1680.0,140.5 1686.0,140.8 1692.0,141.1 1698.0,141.3 1704.0,141.5 1710.0,141.6 1716.0,141.6 1722.0,141.5 1728.0,141.3 1734.0,141.0 1740.0,140.6 1746.0,140.1 1752.0,139.5 1758.0,138.9 1764.0,138.3 1770.0,137.6 1776.0,137.0 1782.0,136.5 1788.0,136.1 1794.0,135.7 1800.0,135.5 1806.0,135.4 1812.0,135.5 1818.0,135.7 1824.0,136.0 1830.0,136.4 1836.0,136.9 1842.0,137.5 1848.0,138.1 1854.0,138.7 1860.0,139.3 1866.0,139.9 1872.0,140.4 1878.0,140.9 1884.0,141.3 1890.0,141.5 1896.0,141.7 1902.0,141.8 1908.0,141.8 1914.0,141.7 1920.0,141.5 1926.0,141.2 1932.0,140.9 1938.0,140.6 1944.0,140.2 1950.0,139.8 1956.0,139.5 1962.0,139.2 1968.0,138.9 1974.0,138.7 1980.0,138.5 1986.0,138.4 1992.0,138.4 1998.0,138.5 2004.0,138.6 2010.0,138.8 2016.0,139.1 2022.0,139.4 2028.0,139.8 2034.0,140.1 2040.0,140.5 2046.0,140.8 2052.0,141.1 2058.0,141.4 2064.0,141.5 2070.0,141.6 2076.0,141.6 2082.0,141.5 2088.0,141.2 2094.0,140.9 2100.0,140.5 2106.0,140.0 2112.0,139.4 2118.0,138.8 2124.0,138.2 2130.0,137.5 2136.0,137.0 2142.0,136.4 2148.0,136.0 2154.0,135.7 2160.0,135.5 2166.0,135.4 2172.0,135.5 2178.0,135.7 2184.0,136.0 2190.0,136.5 2196.0,137.0 2202.0,137.6 2208.0,138.2 2214.0,138.8 2220.0,139.4 2226.0,140.0 2232.0,140.5 2238.0,141.0 2244.0,141.3" stroke="#fff" stroke-width="20" stroke-opacity="0.5" fill="none" stroke-linejoin="round"/><polyline points="1380.0,549.0 1386.0,549.6 1392.0,550.4 1398.0,551.1 1404.0,551.9 1410.0,552.7 1416.0,553.4 1422.0,554.0 1428.0,554.5 1434.0,554.8 1440.0,555.0 1446.0,555.0 1452.0,554.8 1458.0,554.5 1464.0,554.0 1470.0,553.4 1476.0,552.7 1482.0,551.9 1488.0,551.1 1494.0,550.4 1500.0,549.6 1506.0,549.0 1512.0,548.4 1518.0,547.9 1524.0,547.5 1530.0,547.1 1536.0,546.8 1542.0,546.6 1548.0,546.4 1554.0,546.3 1560.0,546.2 1566.0,546.1 1572.0,546.1 1578.0,546.1 1584.0,546.0 1590.0,546.0 1596.0,546.0 1602.0,546.0 1608.0,546.0 1614.0,546.0 1620.0,546.0 1626.0,546.0 1632.0,546.0 1638.0,546.0 1644.0,546.0 1650.0,546.0 1656.0,546.0 1662.0,546.0 1668.0,546.1 1674.0,546.1 1680.0,546.1 1686.0,546.2 1692.0,546.3 1698.0,546.4 1704.0,546.6 1710.0,546.8 1716.0,547.1 1722.0,547.5 1728.0,548.0 1734.0,548.5 1740.0,549.1 1746.0,549.7 1752.0,550.5 1758.0,551.2 1764.0,552.0 1770.0,552.7 1776.0,553.4 1782.0,554.0 1788.0,554.5 1794.0,554.8 1800.0,555.0 1806.0,555.0 1812.0,554.8 1818.0,554.4 1824.0,553.9 1830.0,553.3 1836.0,552.6 1842.0,551.8 1848.0,551.0 1854.0,550.3 1860.0,549.6 1866.0,548.9 1872.0,548.3 1878.0,547.8 1884.0,547.4 1890.0,547.1 1896.0,546.8 1902.0,546.6 1908.0,546.4 1914.0,546.3 1920.0,546.2 1926.0,546.1 1932.0,546.1 1938.0,546.1 1944.0,546.0 1950.0,546.0 1956.0,546.0 1962.0,546.0 1968.0,546.0 1974.0,546.0 1980.0,546.0 1986.0,546.0 1992.0,546.0 1998.0,546.0 2004.0,546.0 2010.0,546.0 2016.0,546.0 2022.0,546.0 2028.0,546.1 2034.0,546.1 2040.0,546.2 2046.0,546.2 2052.0,546.3 2058.0,546.5 2064.0,546.6 2070.0,546.9 2076.0,547.2 2082.0,547.6 2088.0,548.0 2094.0,548.5 2100.0,549.2 2106.0,549.8 2112.0,550.6 2118.0,551.3 2124.0,552.1 2130.0,552.8 2136.0,553.5 2142.0,554.1 2148.0,554.6 2154.0,554.9 2160.0,555.0 2166.0,554.9 2172.0,554.7 2178.0,554.3 2184.0,553.8 2190.0,553.2 2196.0,552.5 2202.0,551.7 2208.0,550.9 2214.0,550.2 2220.0,549.5 2226.0,548.8 2232.0,548.3 2238.0,547.8 2244.0,547.4" stroke="#fff" stroke-width="20" stroke-opacity="0.5" fill="none" stroke-linejoin="round"/><linearGradient id="hg0" gradientUnits="userSpaceOnUse" x1="1333" y1="0" x2="1573" y2="0"><stop offset="0" stop-color="#fff" stop-opacity="0"/><stop offset="0.18" stop-color="#fff"/><stop offset="0.82" stop-color="#fff"/><stop offset="1" stop-color="#fff" stop-opacity="0"/></linearGradient><linearGradient id="tg0" gradientUnits="userSpaceOnUse" x1="1059" y1="0" x2="1483" y2="0"><stop offset="0" stop-color="#fff" stop-opacity="0"/><stop offset="0.16" stop-color="#fff"/><stop offset="0.84" stop-color="#fff"/><stop offset="1" stop-color="#fff" stop-opacity="0"/></linearGradient><polyline points="1331.0,138.2 1336.0,138.2 1341.0,138.1 1346.0,138.0 1351.0,137.9 1356.0,137.7 1361.0,137.6 1366.0,137.3 1371.0,137.1 1376.0,136.8 1381.0,136.5 1386.0,136.2 1391.0,135.8 1396.0,135.4 1401.0,135.0 1406.0,134.6 1411.0,134.3 1416.0,133.9 1421.0,133.6 1426.0,133.3 1431.0,133.1 1436.0,133.0 1441.0,132.9 1446.0,132.9 1451.0,133.0 1456.0,133.2 1461.0,133.4 1466.0,133.7 1471.0,134.0 1476.0,134.3 1481.0,134.7 1486.0,135.1 1491.0,135.5 1496.0,135.9 1501.0,136.2 1506.0,136.6 1511.0,136.9 1516.0,137.1 1521.0,137.4 1526.0,137.6 1531.0,137.8 1536.0,137.9 1541.0,138.0 1546.0,138.1 1551.0,138.2 1556.0,138.2 1561.0,138.3 1566.0,138.3 1571.0,138.3 1576.0,138.4" stroke="url(#hg0)" stroke-width="20" stroke-opacity="0.8" fill="none" stroke-linejoin="round"/><polyline points="1056.0,546.0 1061.0,546.0 1066.0,546.0 1071.0,546.0 1076.0,546.0 1081.0,546.0 1086.0,546.0 1091.0,546.0 1096.0,546.0 1101.0,546.0 1106.0,546.0 1111.0,546.0 1116.0,546.0 1121.0,546.0 1126.0,546.0 1131.0,546.0 1136.0,544.6 1141.0,542.2 1146.0,539.5 1151.0,536.5 1156.0,533.2 1161.0,529.6 1166.0,525.7 1171.0,521.4 1176.0,516.7 1181.0,511.6 1186.0,506.1 1191.0,500.1 1196.0,493.6 1201.0,486.7 1206.0,479.2 1211.0,471.2 1216.0,462.8 1221.0,453.8 1226.0,444.3 1231.0,434.4 1236.0,424.0 1241.0,413.1 1246.0,401.9 1251.0,390.4 1256.0,378.6 1261.0,366.6 1266.0,354.4 1271.0,342.2 1276.0,330.0 1281.0,317.8 1286.0,305.8 1291.0,294.0 1296.0,282.5 1301.0,271.3 1306.0,260.4 1311.0,250.0 1316.0,240.0 1321.0,230.5 1326.0,221.5 1331.0,213.0 1336.0,205.0 1341.0,197.4 1346.0,190.4 1351.0,183.8 1356.0,177.7 1361.0,172.0 1366.0,166.7 1371.0,161.7 1376.0,157.1 1381.0,152.9 1386.0,149.0 1391.0,145.3 1396.0,142.0 1401.0,138.9 1406.0,136.0 1411.0,134.3 1416.0,133.9 1421.0,133.6 1426.0,133.3 1431.0,133.1 1436.0,133.0 1441.0,132.9 1446.0,132.9 1451.0,133.0 1456.0,133.2 1461.0,133.4 1466.0,133.7 1471.0,134.0 1476.0,134.3 1481.0,134.7 1486.0,135.1" stroke="url(#tg0)" stroke-width="5.5" stroke-opacity="1" fill="none" stroke-linejoin="round"/><polyline points="1331.0,546.6 1336.0,546.8 1341.0,547.1 1346.0,547.5 1351.0,547.9 1356.0,548.4 1361.0,549.1 1366.0,549.9 1371.0,550.7 1376.0,551.7 1381.0,552.9 1386.0,554.1 1391.0,555.4 1396.0,556.8 1401.0,558.3 1406.0,559.7 1411.0,561.0 1416.0,562.3 1421.0,563.5 1426.0,564.5 1431.0,565.2 1436.0,565.7 1441.0,566.0 1446.0,566.0 1451.0,565.6 1456.0,565.1 1461.0,564.3 1466.0,563.3 1471.0,562.1 1476.0,560.8 1481.0,559.4 1486.0,558.0 1491.0,556.5 1496.0,555.2 1501.0,553.9 1506.0,552.6 1511.0,551.5 1516.0,550.6 1521.0,549.7 1526.0,549.0 1531.0,548.3 1536.0,547.8 1541.0,547.4 1546.0,547.0 1551.0,546.8 1556.0,546.6 1561.0,546.4 1566.0,546.3 1571.0,546.2 1576.0,546.1" stroke="url(#hg0)" stroke-width="20" stroke-opacity="0.8" fill="none" stroke-linejoin="round"/><polyline points="1056.0,138.4 1061.0,138.4 1066.0,138.4 1071.0,138.4 1076.0,138.4 1081.0,138.4 1086.0,138.4 1091.0,138.4 1096.0,138.4 1101.0,138.4 1106.0,138.4 1111.0,138.4 1116.0,138.4 1121.0,138.4 1126.0,138.4 1131.0,138.4 1136.0,139.8 1141.0,142.2 1146.0,144.9 1151.0,147.9 1156.0,151.2 1161.0,154.8 1166.0,158.7 1171.0,163.0 1176.0,167.7 1181.0,172.8 1186.0,178.3 1191.0,184.3 1196.0,190.8 1201.0,197.7 1206.0,205.2 1211.0,213.2 1216.0,221.6 1221.0,230.6 1226.0,240.1 1231.0,250.0 1236.0,260.4 1241.0,271.3 1246.0,282.5 1251.0,294.0 1256.0,305.8 1261.0,317.8 1266.0,330.0 1271.0,342.2 1276.0,354.4 1281.0,366.6 1286.0,378.6 1291.0,390.4 1296.0,402.0 1301.0,413.2 1306.0,424.1 1311.0,434.5 1316.0,444.5 1321.0,454.1 1326.0,463.2 1331.0,471.9 1336.0,480.0 1341.0,487.8 1346.0,495.1 1351.0,502.0 1356.0,508.5 1361.0,514.7 1366.0,520.5 1371.0,526.1 1376.0,531.4 1381.0,536.5 1386.0,541.3 1391.0,545.9 1396.0,550.3 1401.0,554.4 1406.0,558.3 1411.0,561.0 1416.0,562.3 1421.0,563.5 1426.0,564.5 1431.0,565.2 1436.0,565.7 1441.0,566.0 1446.0,566.0 1451.0,565.6 1456.0,565.1 1461.0,564.3 1466.0,563.3 1471.0,562.1 1476.0,560.8 1481.0,559.4 1486.0,558.0" stroke="url(#tg0)" stroke-width="5.5" stroke-opacity="1" fill="none" stroke-linejoin="round"/><linearGradient id="hg1" gradientUnits="userSpaceOnUse" x1="1692.2" y1="0" x2="1932.2" y2="0"><stop offset="0" stop-color="#fff" stop-opacity="0"/><stop offset="0.18" stop-color="#fff"/><stop offset="0.82" stop-color="#fff"/><stop offset="1" stop-color="#fff" stop-opacity="0"/></linearGradient><linearGradient id="tg1" gradientUnits="userSpaceOnUse" x1="1418.2" y1="0" x2="1842.2" y2="0"><stop offset="0" stop-color="#fff" stop-opacity="0"/><stop offset="0.16" stop-color="#fff"/><stop offset="0.84" stop-color="#fff"/><stop offset="1" stop-color="#fff" stop-opacity="0"/></linearGradient><polyline points="1690.2,138.2 1695.2,138.2 1700.2,138.1 1705.2,138.0 1710.2,137.9 1715.2,137.7 1720.2,137.6 1725.2,137.3 1730.2,137.1 1735.2,136.8 1740.2,136.5 1745.2,136.2 1750.2,135.8 1755.2,135.4 1760.2,135.0 1765.2,134.6 1770.2,134.3 1775.2,133.9 1780.2,133.6 1785.2,133.3 1790.2,133.1 1795.2,133.0 1800.2,132.9 1805.2,132.9 1810.2,133.0 1815.2,133.2 1820.2,133.4 1825.2,133.7 1830.2,134.0 1835.2,134.3 1840.2,134.7 1845.2,135.1 1850.2,135.5 1855.2,135.9 1860.2,136.2 1865.2,136.6 1870.2,136.9 1875.2,137.1 1880.2,137.4 1885.2,137.6 1890.2,137.8 1895.2,137.9 1900.2,138.0 1905.2,138.1 1910.2,138.2 1915.2,138.2 1920.2,138.3 1925.2,138.3 1930.2,138.3 1935.2,138.4" stroke="url(#hg1)" stroke-width="20" stroke-opacity="0.8" fill="none" stroke-linejoin="round"/><polyline points="1415.2,546.0 1420.2,546.0 1425.2,546.0 1430.2,546.0 1435.2,546.0 1440.2,546.0 1445.2,546.0 1450.2,546.0 1455.2,546.0 1460.2,546.0 1465.2,546.0 1470.2,546.0 1475.2,546.0 1480.2,546.0 1485.2,546.0 1490.2,546.0 1495.2,544.6 1500.2,542.2 1505.2,539.5 1510.2,536.5 1515.2,533.2 1520.2,529.6 1525.2,525.7 1530.2,521.4 1535.2,516.7 1540.2,511.6 1545.2,506.1 1550.2,500.1 1555.2,493.6 1560.2,486.7 1565.2,479.2 1570.2,471.2 1575.2,462.8 1580.2,453.8 1585.2,444.3 1590.2,434.4 1595.2,424.0 1600.2,413.1 1605.2,401.9 1610.2,390.4 1615.2,378.6 1620.2,366.6 1625.2,354.4 1630.2,342.2 1635.2,330.0 1640.2,317.8 1645.2,305.8 1650.2,294.0 1655.2,282.5 1660.2,271.3 1665.2,260.4 1670.2,250.0 1675.2,240.0 1680.2,230.5 1685.2,221.5 1690.2,213.0 1695.2,205.0 1700.2,197.4 1705.2,190.4 1710.2,183.8 1715.2,177.7 1720.2,172.0 1725.2,166.7 1730.2,161.7 1735.2,157.1 1740.2,152.9 1745.2,149.0 1750.2,145.3 1755.2,142.0 1760.2,138.9 1765.2,136.0 1770.2,134.3 1775.2,133.9 1780.2,133.6 1785.2,133.3 1790.2,133.1 1795.2,133.0 1800.2,132.9 1805.2,132.9 1810.2,133.0 1815.2,133.2 1820.2,133.4 1825.2,133.7 1830.2,134.0 1835.2,134.3 1840.2,134.7 1845.2,135.1" stroke="url(#tg1)" stroke-width="5.5" stroke-opacity="1" fill="none" stroke-linejoin="round"/><polyline points="1690.2,546.6 1695.2,546.8 1700.2,547.1 1705.2,547.5 1710.2,547.9 1715.2,548.4 1720.2,549.1 1725.2,549.9 1730.2,550.7 1735.2,551.7 1740.2,552.9 1745.2,554.1 1750.2,555.4 1755.2,556.8 1760.2,558.3 1765.2,559.7 1770.2,561.0 1775.2,562.3 1780.2,563.5 1785.2,564.5 1790.2,565.2 1795.2,565.7 1800.2,566.0 1805.2,566.0 1810.2,565.6 1815.2,565.1 1820.2,564.3 1825.2,563.3 1830.2,562.1 1835.2,560.8 1840.2,559.4 1845.2,558.0 1850.2,556.5 1855.2,555.2 1860.2,553.9 1865.2,552.6 1870.2,551.5 1875.2,550.6 1880.2,549.7 1885.2,549.0 1890.2,548.3 1895.2,547.8 1900.2,547.4 1905.2,547.0 1910.2,546.8 1915.2,546.6 1920.2,546.4 1925.2,546.3 1930.2,546.2 1935.2,546.1" stroke="url(#hg1)" stroke-width="20" stroke-opacity="0.8" fill="none" stroke-linejoin="round"/><polyline points="1415.2,138.4 1420.2,138.4 1425.2,138.4 1430.2,138.4 1435.2,138.4 1440.2,138.4 1445.2,138.4 1450.2,138.4 1455.2,138.4 1460.2,138.4 1465.2,138.4 1470.2,138.4 1475.2,138.4 1480.2,138.4 1485.2,138.4 1490.2,138.4 1495.2,139.8 1500.2,142.2 1505.2,144.9 1510.2,147.9 1515.2,151.2 1520.2,154.8 1525.2,158.7 1530.2,163.0 1535.2,167.7 1540.2,172.8 1545.2,178.3 1550.2,184.3 1555.2,190.8 1560.2,197.7 1565.2,205.2 1570.2,213.2 1575.2,221.6 1580.2,230.6 1585.2,240.1 1590.2,250.0 1595.2,260.4 1600.2,271.3 1605.2,282.5 1610.2,294.0 1615.2,305.8 1620.2,317.8 1625.2,330.0 1630.2,342.2 1635.2,354.4 1640.2,366.6 1645.2,378.6 1650.2,390.4 1655.2,402.0 1660.2,413.2 1665.2,424.1 1670.2,434.5 1675.2,444.5 1680.2,454.1 1685.2,463.2 1690.2,471.9 1695.2,480.0 1700.2,487.8 1705.2,495.1 1710.2,502.0 1715.2,508.5 1720.2,514.7 1725.2,520.5 1730.2,526.1 1735.2,531.4 1740.2,536.5 1745.2,541.3 1750.2,545.9 1755.2,550.3 1760.2,554.4 1765.2,558.3 1770.2,561.0 1775.2,562.3 1780.2,563.5 1785.2,564.5 1790.2,565.2 1795.2,565.7 1800.2,566.0 1805.2,566.0 1810.2,565.6 1815.2,565.1 1820.2,564.3 1825.2,563.3 1830.2,562.1 1835.2,560.8 1840.2,559.4 1845.2,558.0" stroke="url(#tg1)" stroke-width="5.5" stroke-opacity="1" fill="none" stroke-linejoin="round"/><linearGradient id="hg2" gradientUnits="userSpaceOnUse" x1="2051.4" y1="0" x2="2291.4" y2="0"><stop offset="0" stop-color="#fff" stop-opacity="0"/><stop offset="0.18" stop-color="#fff"/><stop offset="0.82" stop-color="#fff"/><stop offset="1" stop-color="#fff" stop-opacity="0"/></linearGradient><linearGradient id="tg2" gradientUnits="userSpaceOnUse" x1="1777.4" y1="0" x2="2201.4" y2="0"><stop offset="0" stop-color="#fff" stop-opacity="0"/><stop offset="0.16" stop-color="#fff"/><stop offset="0.84" stop-color="#fff"/><stop offset="1" stop-color="#fff" stop-opacity="0"/></linearGradient><polyline points="2049.4,138.2 2054.4,138.2 2059.4,138.1 2064.4,138.0 2069.4,137.9 2074.4,137.7 2079.4,137.6 2084.4,137.3 2089.4,137.1 2094.4,136.8 2099.4,136.5 2104.4,136.2 2109.4,135.8 2114.4,135.4 2119.4,135.0 2124.4,134.6 2129.4,134.3 2134.4,133.9 2139.4,133.6 2144.4,133.3 2149.4,133.1 2154.4,133.0 2159.4,132.9 2164.4,132.9 2169.4,133.0 2174.4,133.2 2179.4,133.4 2184.4,133.7 2189.4,134.0 2194.4,134.3 2199.4,134.7 2204.4,135.1 2209.4,135.5 2214.4,135.9 2219.4,136.2 2224.4,136.6 2229.4,136.9 2234.4,137.1 2239.4,137.4 2244.4,137.6 2249.4,137.8 2254.4,137.9 2259.4,138.0 2264.4,138.1 2269.4,138.2 2274.4,138.2 2279.4,138.3 2284.4,138.3 2289.4,138.3 2294.4,138.4" stroke="url(#hg2)" stroke-width="20" stroke-opacity="0.8" fill="none" stroke-linejoin="round"/><polyline points="1774.4,546.0 1779.4,546.0 1784.4,546.0 1789.4,546.0 1794.4,546.0 1799.4,546.0 1804.4,546.0 1809.4,546.0 1814.4,546.0 1819.4,546.0 1824.4,546.0 1829.4,546.0 1834.4,546.0 1839.4,546.0 1844.4,546.0 1849.4,546.0 1854.4,544.6 1859.4,542.2 1864.4,539.5 1869.4,536.5 1874.4,533.2 1879.4,529.6 1884.4,525.7 1889.4,521.4 1894.4,516.7 1899.4,511.6 1904.4,506.1 1909.4,500.1 1914.4,493.6 1919.4,486.7 1924.4,479.2 1929.4,471.2 1934.4,462.8 1939.4,453.8 1944.4,444.3 1949.4,434.4 1954.4,424.0 1959.4,413.1 1964.4,401.9 1969.4,390.4 1974.4,378.6 1979.4,366.6 1984.4,354.4 1989.4,342.2 1994.4,330.0 1999.4,317.8 2004.4,305.8 2009.4,294.0 2014.4,282.5 2019.4,271.3 2024.4,260.4 2029.4,250.0 2034.4,240.0 2039.4,230.5 2044.4,221.5 2049.4,213.0 2054.4,205.0 2059.4,197.4 2064.4,190.4 2069.4,183.8 2074.4,177.7 2079.4,172.0 2084.4,166.7 2089.4,161.7 2094.4,157.1 2099.4,152.9 2104.4,149.0 2109.4,145.3 2114.4,142.0 2119.4,138.9 2124.4,136.0 2129.4,134.3 2134.4,133.9 2139.4,133.6 2144.4,133.3 2149.4,133.1 2154.4,133.0 2159.4,132.9 2164.4,132.9 2169.4,133.0 2174.4,133.2 2179.4,133.4 2184.4,133.7 2189.4,134.0 2194.4,134.3 2199.4,134.7 2204.4,135.1" stroke="url(#tg2)" stroke-width="5.5" stroke-opacity="1" fill="none" stroke-linejoin="round"/><polyline points="2049.4,546.6 2054.4,546.8 2059.4,547.1 2064.4,547.5 2069.4,547.9 2074.4,548.4 2079.4,549.1 2084.4,549.9 2089.4,550.7 2094.4,551.7 2099.4,552.9 2104.4,554.1 2109.4,555.4 2114.4,556.8 2119.4,558.3 2124.4,559.7 2129.4,561.0 2134.4,562.3 2139.4,563.5 2144.4,564.5 2149.4,565.2 2154.4,565.7 2159.4,566.0 2164.4,566.0 2169.4,565.6 2174.4,565.1 2179.4,564.3 2184.4,563.3 2189.4,562.1 2194.4,560.8 2199.4,559.4 2204.4,558.0 2209.4,556.5 2214.4,555.2 2219.4,553.9 2224.4,552.6 2229.4,551.5 2234.4,550.6 2239.4,549.7 2244.4,549.0 2249.4,548.3 2254.4,547.8 2259.4,547.4 2264.4,547.0 2269.4,546.8 2274.4,546.6 2279.4,546.4 2284.4,546.3 2289.4,546.2 2294.4,546.1" stroke="url(#hg2)" stroke-width="20" stroke-opacity="0.8" fill="none" stroke-linejoin="round"/><polyline points="1774.4,138.4 1779.4,138.4 1784.4,138.4 1789.4,138.4 1794.4,138.4 1799.4,138.4 1804.4,138.4 1809.4,138.4 1814.4,138.4 1819.4,138.4 1824.4,138.4 1829.4,138.4 1834.4,138.4 1839.4,138.4 1844.4,138.4 1849.4,138.4 1854.4,139.8 1859.4,142.2 1864.4,144.9 1869.4,147.9 1874.4,151.2 1879.4,154.8 1884.4,158.7 1889.4,163.0 1894.4,167.7 1899.4,172.8 1904.4,178.3 1909.4,184.3 1914.4,190.8 1919.4,197.7 1924.4,205.2 1929.4,213.2 1934.4,221.6 1939.4,230.6 1944.4,240.1 1949.4,250.0 1954.4,260.4 1959.4,271.3 1964.4,282.5 1969.4,294.0 1974.4,305.8 1979.4,317.8 1984.4,330.0 1989.4,342.2 1994.4,354.4 1999.4,366.6 2004.4,378.6 2009.4,390.4 2014.4,402.0 2019.4,413.2 2024.4,424.1 2029.4,434.5 2034.4,444.5 2039.4,454.1 2044.4,463.2 2049.4,471.9 2054.4,480.0 2059.4,487.8 2064.4,495.1 2069.4,502.0 2074.4,508.5 2079.4,514.7 2084.4,520.5 2089.4,526.1 2094.4,531.4 2099.4,536.5 2104.4,541.3 2109.4,545.9 2114.4,550.3 2119.4,554.4 2124.4,558.3 2129.4,561.0 2134.4,562.3 2139.4,563.5 2144.4,564.5 2149.4,565.2 2154.4,565.7 2159.4,566.0 2164.4,566.0 2169.4,565.6 2174.4,565.1 2179.4,564.3 2184.4,563.3 2189.4,562.1 2194.4,560.8 2199.4,559.4 2204.4,558.0" stroke="url(#tg2)" stroke-width="5.5" stroke-opacity="1" fill="none" stroke-linejoin="round"/><linearGradient id="hg3" gradientUnits="userSpaceOnUse" x1="2410.6" y1="0" x2="2650.6" y2="0"><stop offset="0" stop-color="#fff" stop-opacity="0"/><stop offset="0.18" stop-color="#fff"/><stop offset="0.82" stop-color="#fff"/><stop offset="1" stop-color="#fff" stop-opacity="0"/></linearGradient><linearGradient id="tg3" gradientUnits="userSpaceOnUse" x1="2136.6" y1="0" x2="2560.6" y2="0"><stop offset="0" stop-color="#fff" stop-opacity="0"/><stop offset="0.16" stop-color="#fff"/><stop offset="0.84" stop-color="#fff"/><stop offset="1" stop-color="#fff" stop-opacity="0"/></linearGradient><polyline points="2408.6,138.2 2413.6,138.2 2418.6,138.1 2423.6,138.0 2428.6,137.9 2433.6,137.7 2438.6,137.6 2443.6,137.3 2448.6,137.1 2453.6,136.8 2458.6,136.5 2463.6,136.2 2468.6,135.8 2473.6,135.4 2478.6,135.0 2483.6,134.6 2488.6,134.3 2493.6,133.9 2498.6,133.6 2503.6,133.3 2508.6,133.1 2513.6,133.0 2518.6,132.9 2523.6,132.9 2528.6,133.0 2533.6,133.2 2538.6,133.4 2543.6,133.7 2548.6,134.0 2553.6,134.3 2558.6,134.7 2563.6,135.1 2568.6,135.5 2573.6,135.9 2578.6,136.2 2583.6,136.6 2588.6,136.9 2593.6,137.1 2598.6,137.4 2603.6,137.6 2608.6,137.8 2613.6,137.9 2618.6,138.0 2623.6,138.1 2628.6,138.2 2633.6,138.2 2638.6,138.3 2643.6,138.3 2648.6,138.3 2653.6,138.4" stroke="url(#hg3)" stroke-width="20" stroke-opacity="0.8" fill="none" stroke-linejoin="round"/><polyline points="2133.6,546.0 2138.6,546.0 2143.6,546.0 2148.6,546.0 2153.6,546.0 2158.6,546.0 2163.6,546.0 2168.6,546.0 2173.6,546.0 2178.6,546.0 2183.6,546.0 2188.6,546.0 2193.6,546.0 2198.6,546.0 2203.6,546.0 2208.6,546.0 2213.6,544.6 2218.6,542.2 2223.6,539.5 2228.6,536.5 2233.6,533.2 2238.6,529.6 2243.6,525.7 2248.6,521.4 2253.6,516.7 2258.6,511.6 2263.6,506.1 2268.6,500.1 2273.6,493.6 2278.6,486.7 2283.6,479.2 2288.6,471.2 2293.6,462.8 2298.6,453.8 2303.6,444.3 2308.6,434.4 2313.6,424.0 2318.6,413.1 2323.6,401.9 2328.6,390.4 2333.6,378.6 2338.6,366.6 2343.6,354.4 2348.6,342.2 2353.6,330.0 2358.6,317.8 2363.6,305.8 2368.6,294.0 2373.6,282.5 2378.6,271.3 2383.6,260.4 2388.6,250.0 2393.6,240.0 2398.6,230.5 2403.6,221.5 2408.6,213.0 2413.6,205.0 2418.6,197.4 2423.6,190.4 2428.6,183.8 2433.6,177.7 2438.6,172.0 2443.6,166.7 2448.6,161.7 2453.6,157.1 2458.6,152.9 2463.6,149.0 2468.6,145.3 2473.6,142.0 2478.6,138.9 2483.6,136.0 2488.6,134.3 2493.6,133.9 2498.6,133.6 2503.6,133.3 2508.6,133.1 2513.6,133.0 2518.6,132.9 2523.6,132.9 2528.6,133.0 2533.6,133.2 2538.6,133.4 2543.6,133.7 2548.6,134.0 2553.6,134.3 2558.6,134.7 2563.6,135.1" stroke="url(#tg3)" stroke-width="5.5" stroke-opacity="1" fill="none" stroke-linejoin="round"/><polyline points="2408.6,546.6 2413.6,546.8 2418.6,547.1 2423.6,547.5 2428.6,547.9 2433.6,548.4 2438.6,549.1 2443.6,549.9 2448.6,550.7 2453.6,551.7 2458.6,552.9 2463.6,554.1 2468.6,555.4 2473.6,556.8 2478.6,558.3 2483.6,559.7 2488.6,561.0 2493.6,562.3 2498.6,563.5 2503.6,564.5 2508.6,565.2 2513.6,565.7 2518.6,566.0 2523.6,566.0 2528.6,565.6 2533.6,565.1 2538.6,564.3 2543.6,563.3 2548.6,562.1 2553.6,560.8 2558.6,559.4 2563.6,558.0 2568.6,556.5 2573.6,555.2 2578.6,553.9 2583.6,552.6 2588.6,551.5 2593.6,550.6 2598.6,549.7 2603.6,549.0 2608.6,548.3 2613.6,547.8 2618.6,547.4 2623.6,547.0 2628.6,546.8 2633.6,546.6 2638.6,546.4 2643.6,546.3 2648.6,546.2 2653.6,546.1" stroke="url(#hg3)" stroke-width="20" stroke-opacity="0.8" fill="none" stroke-linejoin="round"/><polyline points="2133.6,138.4 2138.6,138.4 2143.6,138.4 2148.6,138.4 2153.6,138.4 2158.6,138.4 2163.6,138.4 2168.6,138.4 2173.6,138.4 2178.6,138.4 2183.6,138.4 2188.6,138.4 2193.6,138.4 2198.6,138.4 2203.6,138.4 2208.6,138.4 2213.6,139.8 2218.6,142.2 2223.6,144.9 2228.6,147.9 2233.6,151.2 2238.6,154.8 2243.6,158.7 2248.6,163.0 2253.6,167.7 2258.6,172.8 2263.6,178.3 2268.6,184.3 2273.6,190.8 2278.6,197.7 2283.6,205.2 2288.6,213.2 2293.6,221.6 2298.6,230.6 2303.6,240.1 2308.6,250.0 2313.6,260.4 2318.6,271.3 2323.6,282.5 2328.6,294.0 2333.6,305.8 2338.6,317.8 2343.6,330.0 2348.6,342.2 2353.6,354.4 2358.6,366.6 2363.6,378.6 2368.6,390.4 2373.6,402.0 2378.6,413.2 2383.6,424.1 2388.6,434.5 2393.6,444.5 2398.6,454.1 2403.6,463.2 2408.6,471.9 2413.6,480.0 2418.6,487.8 2423.6,495.1 2428.6,502.0 2433.6,508.5 2438.6,514.7 2443.6,520.5 2448.6,526.1 2453.6,531.4 2458.6,536.5 2463.6,541.3 2468.6,545.9 2473.6,550.3 2478.6,554.4 2483.6,558.3 2488.6,561.0 2493.6,562.3 2498.6,563.5 2503.6,564.5 2508.6,565.2 2513.6,565.7 2518.6,566.0 2523.6,566.0 2528.6,565.6 2533.6,565.1 2538.6,564.3 2543.6,563.3 2548.6,562.1 2553.6,560.8 2558.6,559.4 2563.6,558.0" stroke="url(#tg3)" stroke-width="5.5" stroke-opacity="1" fill="none" stroke-linejoin="round"/></g>
<line x1="1462.2" y1="340.6" x2="2156.1" y2="340.6" stroke="#9a9a9a" stroke-width="1.5" stroke-dasharray="1.5 21.570"/><line x1="1463" y1="85.1" x2="1463" y2="631.8" stroke="#9a9a9a" stroke-width="1.5" stroke-dasharray="1.5 34.900" opacity="0.8"/><line x1="1578.3" y1="85.1" x2="1578.3" y2="631.8" stroke="#9a9a9a" stroke-width="1.5" stroke-dasharray="1.5 34.900" opacity="0.8"/><line x1="1693.7" y1="85.1" x2="1693.7" y2="631.8" stroke="#9a9a9a" stroke-width="1.5" stroke-dasharray="1.5 34.900" opacity="0.8"/><line x1="1809" y1="85.1" x2="1809" y2="631.8" stroke="#9a9a9a" stroke-width="1.5" stroke-dasharray="1.5 34.900" opacity="0.8"/><line x1="1924.3" y1="85.1" x2="1924.3" y2="631.8" stroke="#9a9a9a" stroke-width="1.5" stroke-dasharray="1.5 34.900" opacity="0.8"/><line x1="2039.7" y1="85.1" x2="2039.7" y2="631.8" stroke="#9a9a9a" stroke-width="1.5" stroke-dasharray="1.5 34.900" opacity="0.8"/><line x1="2155.1" y1="85.1" x2="2155.1" y2="631.8" stroke="#9a9a9a" stroke-width="1.5" stroke-dasharray="1.5 34.900" opacity="0.8"/>
<path d="M1463 62.6 v13 M1463 637.8 v-7 M1486 62.6 v8 M1486 637.8 v-7 M1509.1 62.6 v8 M1509.1 637.8 v-7 M1532.2 62.6 v8 M1532.2 637.8 v-7 M1555.2 62.6 v8 M1555.2 637.8 v-7 M1578.3 62.6 v13 M1601.4 62.6 v8 M1601.4 637.8 v-7 M1624.4 62.6 v8 M1624.4 637.8 v-7 M1647.5 62.6 v8 M1647.5 637.8 v-7 M1670.6 62.6 v8 M1670.6 637.8 v-7 M1693.7 62.6 v13 M1716.7 62.6 v8 M1716.7 637.8 v-7 M1739.8 62.6 v8 M1739.8 637.8 v-7 M1762.9 62.6 v8 M1762.9 637.8 v-7 M1785.9 62.6 v8 M1785.9 637.8 v-7 M1809 62.6 v13 M1832.1 62.6 v8 M1832.1 637.8 v-7 M1855.1 62.6 v8 M1855.1 637.8 v-7 M1878.2 62.6 v8 M1878.2 637.8 v-7 M1901.3 62.6 v8 M1901.3 637.8 v-7 M1924.3 62.6 v13 M1947.4 62.6 v8 M1947.4 637.8 v-7 M1970.5 62.6 v8 M1970.5 637.8 v-7 M1993.6 62.6 v8 M1993.6 637.8 v-7 M2016.6 62.6 v8 M2016.6 637.8 v-7 M2039.7 62.6 v13 M2062.8 62.6 v8 M2062.8 637.8 v-7 M2085.8 62.6 v8 M2085.8 637.8 v-7 M2108.9 62.6 v8 M2108.9 637.8 v-7 M2132 62.6 v8 M2132 637.8 v-7 M2155.1 62.6 v13 M2155.1 637.8 v-7 M1449.6 85.8 h8 M2167.8 85.8 h-7 M1449.6 122.2 h8 M2167.8 122.2 h-7 M1449.6 158.6 h13 M2167.8 158.6 h-7 M1449.6 195 h8 M2167.8 195 h-7 M1449.6 231.4 h8 M2167.8 231.4 h-7 M1449.6 267.8 h8 M2167.8 267.8 h-7 M1449.6 304.2 h8 M2167.8 304.2 h-7 M1449.6 340.6 h13 M2167.8 340.6 h-7 M1449.6 377 h8 M2167.8 377 h-7 M1449.6 413.4 h8 M2167.8 413.4 h-7 M1449.6 449.8 h8 M2167.8 449.8 h-7 M1449.6 486.2 h8 M2167.8 486.2 h-7 M1449.6 522.6 h13 M2167.8 522.6 h-7 M1449.6 559 h8 M2167.8 559 h-7 M1449.6 595.4 h8 M2167.8 595.4 h-7" stroke="#a0a0a0" stroke-width="1.7" fill="none"/>
<text x="1578.8" y="634.1" font-size="11.2" fill="#b4b4b4" text-anchor="middle" font-weight="400" opacity="0.9">-40 ps</text>
<text x="1694.2" y="634.1" font-size="11.2" fill="#b4b4b4" text-anchor="middle" font-weight="400" opacity="0.9">-20 ps</text>
<text x="1809.5" y="634.1" font-size="11.2" fill="#b4b4b4" text-anchor="middle" font-weight="400" opacity="0.9">0 s</text>
<text x="1924.8" y="634.1" font-size="11.2" fill="#b4b4b4" text-anchor="middle" font-weight="400" opacity="0.9">20 ps</text>
<text x="2040.2" y="634.1" font-size="11.2" fill="#b4b4b4" text-anchor="middle" font-weight="400" opacity="0.9">40 ps</text>
<text x="2162.8" y="162.7" font-size="11.4" fill="#c0c0c0" text-anchor="end" font-weight="400" style="paint-order:stroke" stroke="#000" stroke-width="1.5" stroke-opacity="0.55">200 mV</text>
<text x="2162.8" y="344.7" font-size="11.4" fill="#c0c0c0" text-anchor="end" font-weight="400" style="paint-order:stroke" stroke="#000" stroke-width="1.5" stroke-opacity="0.55">0 V</text>
<text x="2162.8" y="526.7" font-size="11.4" fill="#c0c0c0" text-anchor="end" font-weight="400" style="paint-order:stroke" stroke="#000" stroke-width="1.5" stroke-opacity="0.55">-200 mV</text>
<text x="1459.2" y="570.3" font-size="14.0" fill="#f4f4f4" text-anchor="start" font-weight="400" style="paint-order:stroke" stroke="#000" stroke-width="2.2" stroke-opacity="0.85">Eye:</text>
<text x="1459.2" y="589.9" font-size="14.0" fill="#f4f4f4" text-anchor="start" font-weight="400" style="paint-order:stroke" stroke="#000" stroke-width="2.2" stroke-opacity="0.85">Mid-level:</text>
<text x="1530.6" y="589.9" font-size="14.0" fill="#f4f4f4" text-anchor="start" font-weight="400" style="paint-order:stroke" stroke="#000" stroke-width="2.2" stroke-opacity="0.85">-0.00386902 V</text>
<text x="1459.2" y="609.6" font-size="14.0" fill="#f4f4f4" text-anchor="start" font-weight="400" style="paint-order:stroke" stroke="#000" stroke-width="2.2" stroke-opacity="0.85">UIs:</text>
<text x="1490.2" y="609.6" font-size="14.0" fill="#f4f4f4" text-anchor="start" font-weight="400" style="paint-order:stroke" stroke="#000" stroke-width="2.2" stroke-opacity="0.85">3793/6398</text>
<text x="1563.4" y="609.6" font-size="14.0" fill="#f4f4f4" text-anchor="start" font-weight="400" style="paint-order:stroke" stroke="#000" stroke-width="2.2" stroke-opacity="0.85">Total:</text>
<text x="1607.6" y="609.6" font-size="14.0" fill="#f4f4f4" text-anchor="start" font-weight="400" style="paint-order:stroke" stroke="#000" stroke-width="2.2" stroke-opacity="0.85">323477/505260</text>
<path d="M2117 70.8 H2156 Q2159 70.8 2159 73.8 V112.8 Z" fill="#505050"/><circle cx="2150.2" cy="79.6" r="4.8" fill="none" stroke="#b0b0b0" stroke-width="1.7"/><line x1="2146.6" y1="83.8" x2="2138.4" y2="90.6" stroke="#b0b0b0" stroke-width="2.6" stroke-linecap="round"/>
</svg>
<svg class="plot" style="left:1449.6px;top:675.1px" width="718.2" height="575" viewBox="1449.6 675.1 718.2 575" font-family='"Liberation Sans", sans-serif' >
<line x1="1449" y1="732.6" x2="2167.8" y2="732.6" stroke="#a6a6a6" stroke-opacity="1" stroke-width="1.5" stroke-dasharray="1.5 12.870"/><line x1="1449" y1="790.1" x2="2167.8" y2="790.1" stroke="#a6a6a6" stroke-opacity="1" stroke-width="1.5" stroke-dasharray="1.5 12.870"/><line x1="1449" y1="847.6" x2="2167.8" y2="847.6" stroke="#a6a6a6" stroke-opacity="1" stroke-width="1.5" stroke-dasharray="1.5 12.870"/><line x1="1449" y1="905.1" x2="2167.8" y2="905.1" stroke="#a6a6a6" stroke-opacity="1" stroke-width="1.5" stroke-dasharray="1.5 12.870"/><line x1="1449" y1="962.6" x2="2167.8" y2="962.6" stroke="#a6a6a6" stroke-opacity="1" stroke-width="1.5" stroke-dasharray="1.5 12.870"/><line x1="1449" y1="1020.1" x2="2167.8" y2="1020.1" stroke="#a6a6a6" stroke-opacity="1" stroke-width="1.5" stroke-dasharray="1.5 12.870"/><line x1="1449" y1="1077.6" x2="2167.8" y2="1077.6" stroke="#a6a6a6" stroke-opacity="1" stroke-width="1.5" stroke-dasharray="1.5 12.870"/><line x1="1449" y1="1135.1" x2="2167.8" y2="1135.1" stroke="#a6a6a6" stroke-opacity="1" stroke-width="1.5" stroke-dasharray="1.5 12.870"/><line x1="1449" y1="1192.6" x2="2167.8" y2="1192.6" stroke="#a6a6a6" stroke-opacity="1" stroke-width="1.5" stroke-dasharray="1.5 12.870"/><line x1="1521.6" y1="685.9" x2="1521.6" y2="1250.1" stroke="#a6a6a6" stroke-opacity="1" stroke-width="1.5" stroke-dasharray="1.5 10.000"/><line x1="1593.5" y1="685.9" x2="1593.5" y2="1250.1" stroke="#a6a6a6" stroke-opacity="1" stroke-width="1.5" stroke-dasharray="1.5 10.000"/><line x1="1665.3" y1="685.9" x2="1665.3" y2="1250.1" stroke="#a6a6a6" stroke-opacity="1" stroke-width="1.5" stroke-dasharray="1.5 10.000"/><line x1="1737.2" y1="685.9" x2="1737.2" y2="1250.1" stroke="#a6a6a6" stroke-opacity="1" stroke-width="1.5" stroke-dasharray="1.5 10.000"/><line x1="1809" y1="685.9" x2="1809" y2="1250.1" stroke="#a6a6a6" stroke-opacity="1" stroke-width="1.5" stroke-dasharray="1.5 10.000"/><line x1="1880.8" y1="685.9" x2="1880.8" y2="1250.1" stroke="#a6a6a6" stroke-opacity="1" stroke-width="1.5" stroke-dasharray="1.5 10.000"/><line x1="1952.7" y1="685.9" x2="1952.7" y2="1250.1" stroke="#a6a6a6" stroke-opacity="1" stroke-width="1.5" stroke-dasharray="1.5 10.000"/><line x1="2024.5" y1="685.9" x2="2024.5" y2="1250.1" stroke="#a6a6a6" stroke-opacity="1" stroke-width="1.5" stroke-dasharray="1.5 10.000"/><line x1="2096.4" y1="685.9" x2="2096.4" y2="1250.1" stroke="#a6a6a6" stroke-opacity="1" stroke-width="1.5" stroke-dasharray="1.5 10.000"/>
<defs><path id="wfp" d="M1448.6 825.6V825.6h1.236V823.4h1.236V820.6h1.236V819.7h1.236V826.4h1.236V825.8h1.236V824.0h1.236V826.0h1.236V823.9h1.236V817.1h1.236V822.6h1.236V832.1h1.236V821.6h1.236V821.0h1.236V827.6h1.236V827.0h1.236V826.8h1.236V822.5h1.236V828.3h1.236V827.7h1.236V825.2h1.236V825.8h1.236V827.6h1.236V821.2h1.236V823.0h1.236V827.5h1.236V828.0h1.236V825.5h1.236V828.5h1.236V824.8h1.236V828.2h1.236V820.8h1.236V827.8h1.236V826.2h1.236V827.4h1.236V827.5h1.236V826.6h1.236V825.0h1.236V825.5h1.236V826.1h1.236V822.8h1.236V826.6h1.236V826.0h1.236V825.8h1.236V828.5h1.236V822.1h1.236V822.0h1.236V827.3h1.236V824.4h1.236V821.4h1.236V824.6h1.236V836.1h1.236V826.2h1.236V827.6h1.236V824.3h1.236V828.2h1.236V823.8h1.236V827.3h1.236V823.6h1.236V823.2h1.236V822.9h1.236V824.0h1.236V822.8h1.236V818.8h1.236V823.3h1.236V823.5h1.236V828.3h1.236V823.9h1.236V824.1h1.236V824.0h1.236V823.2h1.236V818.4h1.236V824.4h1.236V817.9h1.236V819.6h1.236V822.6h1.236V818.7h1.236V827.1h1.236V821.3h1.236V824.6h1.236V824.0h1.236V823.6h1.236V826.8h1.236V821.8h1.236V831.5h1.236V825.9h1.236V826.6h1.236V827.2h1.236V826.1h1.236V818.3h1.236V823.0h1.236V827.5h1.236V825.0h1.236V827.5h1.236V834.6h1.236V823.3h1.236V827.3h1.236V826.3h1.236V831.9h1.236V823.3h1.236V821.5h1.236V824.6h1.236V819.6h1.236V827.1h1.236V825.3h1.236V821.3h1.236V831.2h1.236V823.2h1.236V823.5h1.236V827.0h1.236V825.9h1.236V823.6h1.236V826.4h1.236V824.0h1.236V835.2h1.236V819.2h1.236V818.3h1.236V823.6h1.236V825.8h1.236V822.8h1.236V826.7h1.236V825.5h1.236V823.0h1.236V828.3h1.236V823.6h1.236V827.6h1.236V819.0h1.236V825.1h1.236V823.5h1.236V824.6h1.236V825.3h1.236V828.3h1.236V822.9h1.236V819.6h1.236V824.3h1.236V830.5h1.236V819.0h1.236V825.7h1.236V821.9h1.236V817.8h1.236V824.0h1.236V819.6h1.236V823.0h1.236V827.7h1.236V823.2h1.236V818.0h1.236V825.9h1.236V822.8h1.236V833.8h1.236V825.1h1.236V825.9h1.236V818.5h1.236V827.5h1.236V828.2h1.236V823.1h1.236V817.4h1.236V820.3h1.236V822.9h1.236V819.7h1.236V823.4h1.236V827.3h1.236V823.4h1.236V822.7h1.236V824.9h1.236V824.9h1.236V821.0h1.236V822.8h1.236V826.0h1.236V833.6h1.236V828.4h1.236V824.1h1.236V819.6h1.236V822.7h1.236V827.1h1.236V824.2h1.236V826.6h1.236V825.6h1.236V824.9h1.236V828.4h1.236V821.6h1.236V836.0h1.236V824.3h1.236V824.4h1.236V824.5h1.236V821.9h1.236V827.1h1.236V832.9h1.236V822.9h1.236V823.8h1.236V827.7h1.236V828.3h1.236V827.8h1.236V819.8h1.236V823.8h1.236V824.9h1.236V832.3h1.236V825.5h1.236V822.6h1.236V822.8h1.236V823.1h1.236V823.0h1.236V826.0h1.236V824.5h1.236V827.1h1.236V828.4h1.236V828.1h1.236V826.4h1.236V823.9h1.236V830.1h1.236V823.6h1.236V821.9h1.236V822.8h1.236V825.5h1.236V825.3h1.236V818.6h1.236V827.7h1.236V828.0h1.236V821.5h1.236V821.8h1.236V817.0h1.236V817.8h1.236V827.4h1.236V827.8h1.236V825.2h1.236V817.7h1.236V823.6h1.236V822.9h1.236V836.3h1.236V822.0h1.236V828.0h1.236V822.7h1.236V822.7h1.236V823.1h1.236V827.8h1.236V820.4h1.236V818.6h1.236V825.5h1.236V817.2h1.236V821.9h1.236V833.1h1.236V822.6h1.236V825.8h1.236V826.8h1.236V828.3h1.236V823.4h1.236V828.1h1.236V823.9h1.236V827.2h1.236V824.4h1.236V828.3h1.236V825.6h1.236V819.2h1.236V824.9h1.236V824.4h1.236V819.3h1.236V826.8h1.236V822.1h1.236V825.7h1.236V818.1h1.236V827.9h1.236V827.5h1.236V821.5h1.236V825.6h1.236V828.5h1.236V827.3h1.236V824.7h1.236V824.5h1.236V819.6h1.236V824.1h1.236V823.0h1.236V820.5h1.236V822.8h1.236V824.3h1.236V824.6h1.236V823.6h1.236V826.5h1.236V824.8h1.236V827.0h1.236V825.3h1.236V827.8h1.236V827.4h1.236V822.7h1.236V827.1h1.236V818.1h1.236V825.9h1.236V825.4h1.236V826.0h1.236V823.4h1.236V836.9h1.236V824.0h1.236V825.0h1.236V827.3h1.236V822.7h1.236V825.4h1.236V823.7h1.236V831.5h1.236V824.4h1.236V818.7h1.236V828.1h1.236V832.5h1.236V822.9h1.236V825.9h1.236V826.5h1.236V823.4h1.236V822.4h1.236V826.5h1.236V823.4h1.236V835.7h1.236V824.4h1.236V824.4h1.236V828.4h1.236V826.3h1.236V820.2h1.236V823.2h1.236V828.5h1.236V820.9h1.236V823.1h1.236V825.7h1.236V817.6h1.236V822.7h1.236V828.2h1.236V825.2h1.236V818.3h1.236V823.1h1.236V825.3h1.236V819.1h1.236V824.7h1.236V817.4h1.236V825.4h1.236V823.2h1.236V820.2h1.236V824.7h1.236V822.2h1.236V827.8h1.236V827.2h1.236V818.5h1.236V832.1h1.236V823.0h1.236V827.2h1.236V819.4h1.236V826.7h1.236V825.3h1.236V825.0h1.236V818.6h1.236V823.3h1.236V828.4h1.236V825.5h1.236V826.3h1.236V827.2h1.236V823.5h1.236V823.3h1.236V827.0h1.236V825.1h1.236V824.3h1.236V823.2h1.236V818.0h1.236V823.9h1.236V826.8h1.236V826.6h1.236V823.0h1.236V826.1h1.236V832.9h1.236V825.0h1.236V823.8h1.236V824.3h1.236V825.2h1.236V818.9h1.236V821.4h1.236V817.7h1.236V825.5h1.236V823.6h1.236V822.5h1.236V827.4h1.236V819.7h1.236V828.1h1.236V819.3h1.236V826.5h1.236V826.6h1.236V828.4h1.236V825.8h1.236V826.9h1.236V823.3h1.236V819.5h1.236V827.0h1.236V824.2h1.236V826.4h1.236V828.3h1.236V822.0h1.236V824.6h1.236V823.5h1.236V822.8h1.236V828.3h1.236V823.7h1.236V821.4h1.236V824.1h1.236V827.5h1.236V823.4h1.236V826.5h1.236V828.0h1.236V824.1h1.236V825.9h1.236V821.5h1.236V826.6h1.236V821.2h1.236V826.7h1.236V827.0h1.236V824.6h1.236V825.6h1.236V821.0h1.236V827.6h1.236V825.9h1.236V827.5h1.236V825.5h1.236V827.4h1.236V818.8h1.236V822.6h1.236V821.7h1.236V828.3h1.236V822.9h1.236V834.0h1.236V832.6h1.236V835.6h1.236V824.5h1.236V818.2h1.236V825.7h1.236V833.0h1.236V826.8h1.236V826.0h1.236V827.3h1.236V822.9h1.236V826.6h1.236V823.6h1.236V818.6h1.236V818.8h1.236V826.7h1.236V828.0h1.236V830.6h1.236V826.3h1.236V819.2h1.236V830.4h1.236V825.2h1.236V818.3h1.236V827.3h1.236V822.3h1.236V821.5h1.236V828.2h1.236V824.8h1.236V822.9h1.236V822.6h1.236V822.8h1.236V821.1h1.236V826.3h1.236V824.8h1.236V821.8h1.236V826.7h1.236V822.8h1.236V826.8h1.236V825.3h1.236V822.9h1.236V820.6h1.236V826.9h1.236V827.3h1.236V817.4h1.236V826.3h1.236V822.9h1.236V826.8h1.236V819.9h1.236V828.0h1.236V827.4h1.236V827.3h1.236V824.2h1.236V822.6h1.236V823.2h1.236V823.2h1.236V823.1h1.236V823.1h1.236V823.4h1.236V822.5h1.236V826.1h1.236V826.2h1.236V827.3h1.236V822.7h1.236V827.8h1.236V826.7h1.236V824.4h1.236V826.4h1.236V828.5h1.236V820.5h1.236V828.0h1.236V827.8h1.236V818.0h1.236V825.7h1.236V826.4h1.236V828.0h1.236V821.7h1.236V831.1h1.236V820.4h1.236V827.0h1.236V834.5h1.236V826.4h1.236V826.7h1.236V829.1h1.236V820.0h1.236V818.4h1.236V825.0h1.236V823.1h1.236V822.7h1.236V827.3h1.236V830.5h1.236V826.0h1.236V822.4h1.236V825.9h1.236V835.8h1.236V826.8h1.236V820.8h1.236V818.2h1.236V823.8h1.236V824.7h1.236V822.8h1.236V822.8h1.236V826.8h1.236V823.5h1.236V822.6h1.236V825.8h1.236V825.9h1.236V823.2h1.236V822.0h1.236V821.4h1.236V822.9h1.236V819.0h1.236V825.4h1.236V825.6h1.236V825.7h1.236V826.4h1.236V826.9h1.236V823.6h1.236V823.0h1.236V823.3h1.236V828.1h1.236V836.6h1.236V828.2h1.236V823.8h1.236V825.2h1.236V824.9h1.236V832.0h1.236V833.9h1.236V826.8h1.236V817.2h1.236V826.0h1.236V822.0h1.236V827.8h1.236V824.1h1.236V836.3h1.236V821.3h1.236V825.7h1.236V825.6h1.236V826.0h1.236V823.7h1.236V823.6h1.236V820.8h1.236V818.6h1.236V827.3h1.236V826.8h1.236V827.2h1.236V823.7h1.236V823.9h1.236V827.1h1.236V821.4h1.236V825.0h1.236V826.0h1.236V823.6h1.236V823.5h1.236V827.5h1.236V828.3h1.236V824.0h1.236V827.8h1.236V833.3h1.236V823.0h1.236V830.8h1.236V822.6h1.236V823.4h1.236V825.0h1.236V1110.6V1110.6h-1.236V1112.1h-1.236V1119.7h-1.236V1113.3h-1.236V1118.5h-1.236V1110.6h-1.236V1110.2h-1.236V1112.6h-1.236V1118.8h-1.236V1112.8h-1.236V1114.8h-1.236V1109.1h-1.236V1113.2h-1.236V1101.2h-1.236V1105.6h-1.236V1116.1h-1.236V1111.2h-1.236V1114.8h-1.236V1117.2h-1.236V1110.1h-1.236V1102.2h-1.236V1111.8h-1.236V1113.1h-1.236V1110.5h-1.236V1098.0h-1.236V1114.4h-1.236V1116.2h-1.236V1113.8h-1.236V1114.2h-1.236V1115.1h-1.236V1111.4h-1.236V1114.2h-1.236V1111.7h-1.236V1109.3h-1.236V1115.7h-1.236V1116.2h-1.236V1111.7h-1.236V1119.1h-1.236V1113.0h-1.236V1119.8h-1.236V1110.2h-1.236V1115.0h-1.236V1117.4h-1.236V1113.1h-1.236V1118.7h-1.236V1115.2h-1.236V1118.0h-1.236V1111.2h-1.236V1119.0h-1.236V1117.5h-1.236V1102.3h-1.236V1115.1h-1.236V1109.7h-1.236V1110.9h-1.236V1111.8h-1.236V1110.3h-1.236V1112.1h-1.236V1114.8h-1.236V1104.8h-1.236V1111.8h-1.236V1117.2h-1.236V1105.8h-1.236V1109.7h-1.236V1114.0h-1.236V1111.8h-1.236V1116.1h-1.236V1111.3h-1.236V1109.7h-1.236V1118.9h-1.236V1119.8h-1.236V1115.3h-1.236V1111.3h-1.236V1110.1h-1.236V1109.9h-1.236V1110.7h-1.236V1110.4h-1.236V1111.1h-1.236V1111.7h-1.236V1115.5h-1.236V1113.1h-1.236V1109.9h-1.236V1109.4h-1.236V1112.9h-1.236V1116.3h-1.236V1116.3h-1.236V1113.1h-1.236V1114.9h-1.236V1114.4h-1.236V1114.8h-1.236V1114.6h-1.236V1110.0h-1.236V1112.8h-1.236V1112.2h-1.236V1113.6h-1.236V1104.7h-1.236V1110.6h-1.236V1113.6h-1.236V1102.6h-1.236V1110.8h-1.236V1119.7h-1.236V1114.1h-1.236V1114.0h-1.236V1114.5h-1.236V1111.7h-1.236V1105.9h-1.236V1114.9h-1.236V1110.8h-1.236V1114.1h-1.236V1112.3h-1.236V1110.2h-1.236V1113.9h-1.236V1109.0h-1.236V1106.5h-1.236V1112.7h-1.236V1098.5h-1.236V1118.9h-1.236V1119.0h-1.236V1109.6h-1.236V1110.6h-1.236V1118.4h-1.236V1106.5h-1.236V1106.1h-1.236V1113.9h-1.236V1119.9h-1.236V1119.5h-1.236V1118.2h-1.236V1111.4h-1.236V1109.4h-1.236V1112.5h-1.236V1118.0h-1.236V1116.2h-1.236V1114.3h-1.236V1112.2h-1.236V1113.7h-1.236V1117.9h-1.236V1114.0h-1.236V1111.6h-1.236V1097.9h-1.236V1112.0h-1.236V1113.9h-1.236V1114.9h-1.236V1115.5h-1.236V1114.4h-1.236V1110.8h-1.236V1111.1h-1.236V1098.4h-1.236V1113.3h-1.236V1113.5h-1.236V1116.3h-1.236V1111.6h-1.236V1110.7h-1.236V1111.7h-1.236V1109.8h-1.236V1111.0h-1.236V1119.3h-1.236V1111.4h-1.236V1109.4h-1.236V1099.2h-1.236V1119.2h-1.236V1112.4h-1.236V1116.1h-1.236V1113.8h-1.236V1116.4h-1.236V1111.0h-1.236V1111.2h-1.236V1115.5h-1.236V1113.9h-1.236V1112.7h-1.236V1114.3h-1.236V1114.4h-1.236V1118.4h-1.236V1114.1h-1.236V1112.5h-1.236V1102.9h-1.236V1114.4h-1.236V1119.4h-1.236V1111.4h-1.236V1111.4h-1.236V1114.8h-1.236V1113.8h-1.236V1101.5h-1.236V1114.6h-1.236V1109.2h-1.236V1110.7h-1.236V1110.7h-1.236V1111.8h-1.236V1113.7h-1.236V1119.5h-1.236V1111.3h-1.236V1111.6h-1.236V1116.5h-1.236V1111.3h-1.236V1110.0h-1.236V1117.6h-1.236V1114.0h-1.236V1113.1h-1.236V1113.1h-1.236V1111.5h-1.236V1110.7h-1.236V1109.3h-1.236V1114.3h-1.236V1109.2h-1.236V1113.5h-1.236V1098.7h-1.236V1112.0h-1.236V1111.3h-1.236V1114.7h-1.236V1113.0h-1.236V1112.1h-1.236V1111.1h-1.236V1119.7h-1.236V1110.0h-1.236V1112.0h-1.236V1114.4h-1.236V1111.2h-1.236V1098.8h-1.236V1113.8h-1.236V1104.3h-1.236V1114.1h-1.236V1111.7h-1.236V1105.9h-1.236V1113.8h-1.236V1114.0h-1.236V1114.0h-1.236V1113.7h-1.236V1114.4h-1.236V1116.0h-1.236V1113.7h-1.236V1112.2h-1.236V1113.7h-1.236V1113.8h-1.236V1114.6h-1.236V1113.0h-1.236V1099.8h-1.236V1118.1h-1.236V1114.4h-1.236V1113.7h-1.236V1116.1h-1.236V1109.9h-1.236V1109.5h-1.236V1109.1h-1.236V1111.1h-1.236V1109.2h-1.236V1109.4h-1.236V1110.4h-1.236V1110.8h-1.236V1116.3h-1.236V1113.1h-1.236V1097.6h-1.236V1119.4h-1.236V1117.0h-1.236V1117.7h-1.236V1112.2h-1.236V1115.5h-1.236V1114.1h-1.236V1110.0h-1.236V1117.9h-1.236V1101.9h-1.236V1113.7h-1.236V1109.4h-1.236V1118.7h-1.236V1109.3h-1.236V1114.8h-1.236V1110.4h-1.236V1105.6h-1.236V1114.2h-1.236V1112.0h-1.236V1112.2h-1.236V1109.7h-1.236V1111.6h-1.236V1117.7h-1.236V1109.2h-1.236V1109.9h-1.236V1109.9h-1.236V1110.4h-1.236V1100.0h-1.236V1114.4h-1.236V1114.7h-1.236V1110.2h-1.236V1110.3h-1.236V1112.0h-1.236V1110.1h-1.236V1109.3h-1.236V1114.3h-1.236V1112.6h-1.236V1113.8h-1.236V1111.5h-1.236V1112.3h-1.236V1111.2h-1.236V1111.2h-1.236V1110.5h-1.236V1104.0h-1.236V1112.3h-1.236V1110.6h-1.236V1112.1h-1.236V1113.9h-1.236V1100.1h-1.236V1100.2h-1.236V1115.4h-1.236V1116.1h-1.236V1112.3h-1.236V1113.4h-1.236V1111.9h-1.236V1111.5h-1.236V1101.1h-1.236V1112.0h-1.236V1109.4h-1.236V1113.3h-1.236V1112.5h-1.236V1112.9h-1.236V1111.2h-1.236V1112.7h-1.236V1114.2h-1.236V1110.5h-1.236V1105.2h-1.236V1109.1h-1.236V1110.4h-1.236V1109.9h-1.236V1111.7h-1.236V1109.5h-1.236V1116.8h-1.236V1109.7h-1.236V1109.3h-1.236V1112.8h-1.236V1110.4h-1.236V1112.2h-1.236V1111.9h-1.236V1114.5h-1.236V1112.3h-1.236V1112.7h-1.236V1111.3h-1.236V1115.0h-1.236V1099.5h-1.236V1112.3h-1.236V1109.3h-1.236V1115.6h-1.236V1112.7h-1.236V1109.0h-1.236V1111.3h-1.236V1110.9h-1.236V1114.9h-1.236V1112.9h-1.236V1112.3h-1.236V1109.4h-1.236V1113.4h-1.236V1111.1h-1.236V1109.7h-1.236V1118.4h-1.236V1117.4h-1.236V1097.1h-1.236V1110.4h-1.236V1119.0h-1.236V1114.3h-1.236V1109.5h-1.236V1118.7h-1.236V1119.9h-1.236V1115.0h-1.236V1113.7h-1.236V1114.3h-1.236V1118.4h-1.236V1111.0h-1.236V1110.6h-1.236V1117.8h-1.236V1112.9h-1.236V1111.6h-1.236V1112.8h-1.236V1101.4h-1.236V1100.5h-1.236V1114.4h-1.236V1111.1h-1.236V1110.5h-1.236V1114.5h-1.236V1111.2h-1.236V1102.0h-1.236V1109.5h-1.236V1111.2h-1.236V1115.0h-1.236V1110.7h-1.236V1110.9h-1.236V1110.5h-1.236V1112.9h-1.236V1111.5h-1.236V1115.7h-1.236V1113.3h-1.236V1112.4h-1.236V1110.5h-1.236V1100.7h-1.236V1111.0h-1.236V1113.5h-1.236V1112.8h-1.236V1109.8h-1.236V1109.5h-1.236V1110.2h-1.236V1110.2h-1.236V1116.3h-1.236V1110.7h-1.236V1114.2h-1.236V1114.9h-1.236V1112.5h-1.236V1112.3h-1.236V1115.3h-1.236V1111.7h-1.236V1109.8h-1.236V1111.2h-1.236V1103.6h-1.236V1111.1h-1.236V1113.6h-1.236V1114.2h-1.236V1112.8h-1.236V1113.6h-1.236V1114.7h-1.236V1112.0h-1.236V1105.5h-1.236V1109.1h-1.236V1111.1h-1.236V1116.8h-1.236V1119.5h-1.236V1112.7h-1.236V1109.9h-1.236V1119.1h-1.236V1114.2h-1.236V1109.1h-1.236V1112.2h-1.236V1113.1h-1.236V1119.0h-1.236V1112.5h-1.236V1110.5h-1.236V1113.8h-1.236V1109.3h-1.236V1116.9h-1.236V1113.6h-1.236V1114.2h-1.236V1112.7h-1.236V1116.5h-1.236V1116.9h-1.236V1109.8h-1.236V1110.0h-1.236V1113.3h-1.236V1113.3h-1.236V1109.4h-1.236V1117.6h-1.236V1112.3h-1.236V1109.6h-1.236V1112.3h-1.236V1111.4h-1.236V1112.5h-1.236V1111.7h-1.236V1114.3h-1.236V1111.9h-1.236V1112.7h-1.236V1112.7h-1.236V1114.5h-1.236V1115.4h-1.236V1111.7h-1.236V1114.0h-1.236V1111.5h-1.236V1111.6h-1.236V1109.0h-1.236V1106.6h-1.236V1110.0h-1.236V1116.5h-1.236V1114.7h-1.236V1112.8h-1.236V1114.0h-1.236V1110.9h-1.236V1113.5h-1.236V1114.6h-1.236V1110.8h-1.236V1115.7h-1.236V1114.6h-1.236V1109.0h-1.236V1117.4h-1.236V1099.8h-1.236V1106.9h-1.236V1111.8h-1.236V1118.5h-1.236V1110.2h-1.236V1114.0h-1.236V1118.3h-1.236V1113.9h-1.236V1114.3h-1.236V1111.7h-1.236V1113.0h-1.236V1110.2h-1.236V1110.5h-1.236V1112.3h-1.236V1109.3h-1.236V1112.1h-1.236V1111.7h-1.236V1113.1h-1.236V1109.5h-1.236V1111.4h-1.236V1119.6h-1.236V1104.6h-1.236V1109.3h-1.236V1109.0h-1.236V1110.5h-1.236V1110.1h-1.236V1111.3h-1.236V1106.6h-1.236V1119.6h-1.236V1111.1h-1.236V1113.0h-1.236V1100.2h-1.236V1114.2h-1.236V1111.4h-1.236V1110.4h-1.236V1112.0h-1.236V1113.0h-1.236V1109.5h-1.236V1112.9h-1.236V1112.3h-1.236V1110.3h-1.236V1112.5h-1.236V1109.8h-1.236V1119.8h-1.236V1113.3h-1.236V1114.0h-1.236V1104.3h-1.236V1111.0h-1.236V1116.4h-1.236V1119.1h-1.236V1111.3h-1.236V1110.7h-1.236V1115.9h-1.236V1114.3h-1.236V1116.9h-1.236V1114.8h-1.236V1114.4h-1.236V1115.2h-1.236V1114.8h-1.236V1111.3h-1.236V1098.0h-1.236V1111.1h-1.236V1106.9h-1.236V1113.9h-1.236V1109.6h-1.236V1111.5h-1.236V1112.9h-1.236V1110.2h-1.236V1104.0h-1.236V1113.7h-1.236V1115.0h-1.236V1115.9h-1.236V1116.4h-1.236V1114.9h-1.236V1109.7h-1.236V1116.6h-1.236V1111.1h-1.236V1111.9h-1.236V1112.4h-1.236V1112.2h-1.236V1112.6h-1.236V1112.1h-1.236V1113.6h-1.236V1106.5h-1.236V1110.2h-1.236V1110.9h-1.236V1117.9h-1.236V1111.7h-1.236V1110.9h-1.236V1110.8h-1.236V1111.3h-1.236V1111.5h-1.236V1112.5h-1.236V1109.8h-1.236V1111.9h-1.236V1112.1h-1.236V1113.1h-1.236V1113.4h-1.236V1113.4h-1.236V1111.6h-1.236V1113.6h-1.236V1111.9h-1.236V1103.5h-1.236V1117.6h-1.236V1111.8h-1.236V1118.6h-1.236V1112.7h-1.236V1110.5h-1.236V1115.7h-1.236V1111.8h-1.236Z"/><clipPath id="wfc"><use href="#wfp"/></clipPath></defs><use href="#wfp" fill="#fdf25a"/>
<g clip-path="url(#wfc)"><line x1="1449" y1="732.6" x2="2167.8" y2="732.6" stroke="#6a6000" stroke-opacity="0.28" stroke-width="1.5" stroke-dasharray="1.5 12.870"/><line x1="1449" y1="790.1" x2="2167.8" y2="790.1" stroke="#6a6000" stroke-opacity="0.28" stroke-width="1.5" stroke-dasharray="1.5 12.870"/><line x1="1449" y1="847.6" x2="2167.8" y2="847.6" stroke="#6a6000" stroke-opacity="0.28" stroke-width="1.5" stroke-dasharray="1.5 12.870"/><line x1="1449" y1="905.1" x2="2167.8" y2="905.1" stroke="#6a6000" stroke-opacity="0.28" stroke-width="1.5" stroke-dasharray="1.5 12.870"/><line x1="1449" y1="962.6" x2="2167.8" y2="962.6" stroke="#6a6000" stroke-opacity="0.28" stroke-width="1.5" stroke-dasharray="1.5 12.870"/><line x1="1449" y1="1020.1" x2="2167.8" y2="1020.1" stroke="#6a6000" stroke-opacity="0.28" stroke-width="1.5" stroke-dasharray="1.5 12.870"/><line x1="1449" y1="1077.6" x2="2167.8" y2="1077.6" stroke="#6a6000" stroke-opacity="0.28" stroke-width="1.5" stroke-dasharray="1.5 12.870"/><line x1="1449" y1="1135.1" x2="2167.8" y2="1135.1" stroke="#6a6000" stroke-opacity="0.28" stroke-width="1.5" stroke-dasharray="1.5 12.870"/><line x1="1449" y1="1192.6" x2="2167.8" y2="1192.6" stroke="#6a6000" stroke-opacity="0.28" stroke-width="1.5" stroke-dasharray="1.5 12.870"/><line x1="1521.6" y1="685.9" x2="1521.6" y2="1250.1" stroke="#6a6000" stroke-opacity="0.28" stroke-width="1.5" stroke-dasharray="1.5 10.000"/><line x1="1593.5" y1="685.9" x2="1593.5" y2="1250.1" stroke="#6a6000" stroke-opacity="0.28" stroke-width="1.5" stroke-dasharray="1.5 10.000"/><line x1="1665.3" y1="685.9" x2="1665.3" y2="1250.1" stroke="#6a6000" stroke-opacity="0.28" stroke-width="1.5" stroke-dasharray="1.5 10.000"/><line x1="1737.2" y1="685.9" x2="1737.2" y2="1250.1" stroke="#6a6000" stroke-opacity="0.28" stroke-width="1.5" stroke-dasharray="1.5 10.000"/><line x1="1809" y1="685.9" x2="1809" y2="1250.1" stroke="#6a6000" stroke-opacity="0.28" stroke-width="1.5" stroke-dasharray="1.5 10.000"/><line x1="1880.8" y1="685.9" x2="1880.8" y2="1250.1" stroke="#6a6000" stroke-opacity="0.28" stroke-width="1.5" stroke-dasharray="1.5 10.000"/><line x1="1952.7" y1="685.9" x2="1952.7" y2="1250.1" stroke="#6a6000" stroke-opacity="0.28" stroke-width="1.5" stroke-dasharray="1.5 10.000"/><line x1="2024.5" y1="685.9" x2="2024.5" y2="1250.1" stroke="#6a6000" stroke-opacity="0.28" stroke-width="1.5" stroke-dasharray="1.5 10.000"/><line x1="2096.4" y1="685.9" x2="2096.4" y2="1250.1" stroke="#6a6000" stroke-opacity="0.28" stroke-width="1.5" stroke-dasharray="1.5 10.000"/></g>
<line x1="1449" y1="676.3" x2="2167.8" y2="676.3" stroke="#9a9a9a" stroke-width="2" stroke-dasharray="1.5 12.870"/><line x1="1450.6" y1="685.9" x2="1450.6" y2="1250.1" stroke="#9a9a9a" stroke-width="2" stroke-dasharray="1.5 10.000"/><line x1="2166.8" y1="685.9" x2="2166.8" y2="1250.1" stroke="#9a9a9a" stroke-width="2" stroke-dasharray="1.5 10.000"/>
<line x1="1809.0" y1="724" x2="1809.0" y2="1250.1" stroke="#b4b4b4" stroke-width="1.3" stroke-dasharray="6.5 4.6"/>
<line x1="1494" y1="962.6" x2="2144" y2="962.6" stroke="#b4aa78" stroke-width="1.4" stroke-dasharray="6 6.6"/>
<text x="2161.8" y="736.8" font-size="11.5" fill="#ece45c" text-anchor="end" font-weight="400" style="paint-order:stroke" stroke="#1a1a00" stroke-width="1.6" stroke-opacity="0.75">400 mV</text>
<text x="2161.8" y="794.3" font-size="11.5" fill="#ece45c" text-anchor="end" font-weight="400" style="paint-order:stroke" stroke="#1a1a00" stroke-width="1.6" stroke-opacity="0.75">300 mV</text>
<text x="2161.8" y="851.8" font-size="11.5" fill="#ece45c" text-anchor="end" font-weight="400" style="paint-order:stroke" stroke="#1a1a00" stroke-width="1.6" stroke-opacity="0.75">200 mV</text>
<text x="2161.8" y="909.3" font-size="11.5" fill="#ece45c" text-anchor="end" font-weight="400" style="paint-order:stroke" stroke="#1a1a00" stroke-width="1.6" stroke-opacity="0.75">100 mV</text>
<text x="2161.8" y="1024.3" font-size="11.5" fill="#ece45c" text-anchor="end" font-weight="400" style="paint-order:stroke" stroke="#1a1a00" stroke-width="1.6" stroke-opacity="0.75">-100 mV</text>
<text x="2161.8" y="1081.8" font-size="11.5" fill="#ece45c" text-anchor="end" font-weight="400" style="paint-order:stroke" stroke="#1a1a00" stroke-width="1.6" stroke-opacity="0.75">-200 mV</text>
<text x="2161.8" y="1139.3" font-size="11.5" fill="#ece45c" text-anchor="end" font-weight="400" style="paint-order:stroke" stroke="#1a1a00" stroke-width="1.6" stroke-opacity="0.75">-300 mV</text>
<text x="2161.8" y="1196.8" font-size="11.5" fill="#ece45c" text-anchor="end" font-weight="400" style="paint-order:stroke" stroke="#1a1a00" stroke-width="1.6" stroke-opacity="0.75">-400 mV</text>
<text x="1521.6" y="1244" font-size="11.2" fill="#b4b4b4" text-anchor="middle" font-weight="400" style="paint-order:stroke" stroke="#000" stroke-width="2">-160 ns</text>
<text x="1593.5" y="1244" font-size="11.2" fill="#b4b4b4" text-anchor="middle" font-weight="400" style="paint-order:stroke" stroke="#000" stroke-width="2">-120 ns</text>
<text x="1665.3" y="1244" font-size="11.2" fill="#b4b4b4" text-anchor="middle" font-weight="400" style="paint-order:stroke" stroke="#000" stroke-width="2">-80 ns</text>
<text x="1737.2" y="1244" font-size="11.2" fill="#b4b4b4" text-anchor="middle" font-weight="400" style="paint-order:stroke" stroke="#000" stroke-width="2">-40 ns</text>
<text x="1808" y="1244" font-size="11.2" fill="#b4b4b4" text-anchor="middle" font-weight="400" style="paint-order:stroke" stroke="#000" stroke-width="2">0 s</text>
<text x="1880.8" y="1244" font-size="11.2" fill="#b4b4b4" text-anchor="middle" font-weight="400" style="paint-order:stroke" stroke="#000" stroke-width="2">40 ns</text>
<text x="1952.7" y="1244" font-size="11.2" fill="#b4b4b4" text-anchor="middle" font-weight="400" style="paint-order:stroke" stroke="#000" stroke-width="2">80 ns</text>
<text x="2024.5" y="1244" font-size="11.2" fill="#b4b4b4" text-anchor="middle" font-weight="400" style="paint-order:stroke" stroke="#000" stroke-width="2">120 ns</text>
<text x="2096.4" y="1244" font-size="11.2" fill="#b4b4b4" text-anchor="middle" font-weight="400" style="paint-order:stroke" stroke="#000" stroke-width="2">160 ns</text>
<rect x="1457.5" y="952.5" width="27" height="20" rx="9" fill="#fffad0" opacity="0.4"/>
<text x="1462.2" y="966.6" font-size="11.6" fill="#141414" text-anchor="start" font-weight="700" letter-spacing="0.4">C 1</text>
<path d="M2168.5 959.3 H2157.3 V951.2 Q2157.3 949 2154.3 949.6 L2140.3 962 L2154.3 974.4 Q2157.3 975 2157.3 972.8 V964.7 H2168.5" fill="#fdf258" stroke="#5c5400" stroke-width="1.5" stroke-linejoin="round"/>
<text x="2159.5" y="970.6" font-size="9" fill="#3a3400" text-anchor="start" font-weight="700" font-style="italic">,</text>
<path d="M1795.8 675.1 H1820.8 L1808.3 686.6 Z" fill="#ef943e"/>
<path d="M1797 688.6 H1819.6 V712.2 H1813.4 L1808.3 720.6 L1803.2 712.2 H1797 Z" fill="#000" stroke="#ef943e" stroke-width="2.1"/>
<text x="1808.3" y="707.3" font-size="18.4" fill="#ef943e" text-anchor="middle" font-weight="400" >T</text>
<path d="M2117 683.3 H2156 Q2159 683.3 2159 686.3 V725.3 Z" fill="#505050"/><circle cx="2150.2" cy="692.1" r="4.8" fill="none" stroke="#b0b0b0" stroke-width="1.7"/><line x1="2146.6" y1="696.3" x2="2138.4" y2="703.1" stroke="#b0b0b0" stroke-width="2.6" stroke-linecap="round"/>
</svg>
<svg class="abs" style="left:1680px;top:643px" width="260" height="32" viewBox="1680 643 260 32" font-family='"Liberation Sans", sans-serif'>
<path d="M1694 648.5 H1687 V669.3 H1694 M1926 648.5 H1933.2 V669.3 H1926" stroke="#d8d8d8" stroke-width="1.5" fill="none"/>
<line x1="1687" y1="658.9" x2="1933" y2="658.9" stroke="#cecece" stroke-width="2.4"/>
<path d="M1800.4 643.9 H1819.6 L1810 650.3 Z" fill="#ef943e"/>
<path d="M1802.5 653.4 H1817.2 V668.2 H1813 L1809.8 673 L1806.6 668.2 H1802.5 Z" fill="#000" stroke="#ef943e" stroke-width="1.7"/>
<text x="1809.8" y="665.6" font-size="12.6" font-weight="700" fill="#ef943e" text-anchor="middle">T</text>
</svg>
<div class="abs" style="left:2189.5px;top:27.5px;width:190px;height:1226px;border:1.4px solid #4c4c4c;box-sizing:border-box;background:#2f2f2f"></div>
<div class="abs" style="left:2178.3px;top:626.1px;width:5.2px;height:5.2px;border-radius:3px;background:#c2c2c2"></div>
<div class="abs" style="left:2178.3px;top:636.8px;width:5.2px;height:5.2px;border-radius:3px;background:#c2c2c2"></div>
<div class="abs" style="left:2178.3px;top:647.6px;width:5.2px;height:5.2px;border-radius:3px;background:#c2c2c2"></div>
<svg class="abs" style="left:2205px;top:0" width="160" height="50" viewBox="2205 0 160 50" font-family='"Liberation Sans", sans-serif'>
<text x="2211.2" y="29.9" font-size="36.5" font-weight="700" fill="#fff" stroke="#fff" stroke-width="1.1" stroke-linejoin="round" textLength="143" lengthAdjust="spacingAndGlyphs">Tektronix</text>
<path d="M2247.2 29.9 L2261.6 8.8 H2266.8 L2254.8 29.9 Z" fill="#3fb2e2"/>
<text x="2282.6" y="44" font-size="14.4" font-weight="700" fill="#fff" text-anchor="middle" letter-spacing="0.7">Add New...</text>
</svg>
<div class="btn" style="left:2200.2px;top:55px;width:78px;height:44.5px;line-height:41.9px">Cursors</div>
<div class="btn" style="left:2288.2px;top:55px;width:78px;height:44.5px;line-height:41.9px">Callout</div>
<div class="btn" style="left:2200.2px;top:112.2px;width:78px;height:43.5px;line-height:40.9px">Measure</div>
<div class="btn" style="left:2288.2px;top:112.2px;width:78px;height:43.5px;line-height:40.9px">Search</div>
<div class="btn" style="left:2200.2px;top:167.6px;width:78px;height:44.2px;line-height:17.2px;padding-top:4px">Results<br>Table</div>
<div class="btn" style="left:2288.2px;top:167.6px;width:78px;height:44.2px;line-height:41.6px">Plot</div>
<div class="abs" style="left:2193px;top:221px;width:181px;height:1.4px;background:#4a4a4a"></div>
<div class="btn" style="left:2200.2px;top:228.6px;width:78px;height:45px;line-height:42.4px"></div>
<div class="btn" style="left:2288.2px;top:228.6px;width:78px;height:45px;line-height:42.4px">More...</div>
<div class="abs" style="left:2193px;top:284.6px;width:181px;height:1.4px;background:#4a4a4a"></div>
<svg class="abs" style="left:2220px;top:232px" width="44" height="40" viewBox="2220 232 44 40">
<rect x="2225.8" y="237.6" width="26.2" height="23.2" fill="none" stroke="#c8c8c8" stroke-width="2.2" stroke-dasharray="5 3.4"/>
<circle cx="2243.2" cy="246.3" r="5.4" fill="none" stroke="#c8c8c8" stroke-width="1.9"/>
<line x1="2239.2" y1="251" x2="2232.2" y2="256.6" stroke="#c8c8c8" stroke-width="2.8" stroke-linecap="round"/>
<path d="M2247.8 255 L2247.8 266.4 L2250.5 264 L2252.7 268.4 L2254.6 267.4 L2252.5 263.2 L2256.2 263 Z" fill="#c8c8c8"/>
</svg>
<div class="badge" style="left:2194px;top:301px;width:179px;height:261px;border-radius:4px"><div class="h" style="height:18.6px;line-height:19px">Meas 1</div><div class="abs" style="left:151.4px;top:4px;width:21px;height:11px;border-radius:5.5px;background:#fff04a;color:#222;font-size:9.5px;line-height:11.5px;text-align:center">1</div><span style="left:4.6px;top:19.5px">Jitter Summary'</span><span style="left:66.6px;top:19.5px"></span><span style="left:4.6px;top:37.6px">DR:</span><span style="left:66.6px;top:37.6px">16.00 Gb/s</span><span style="left:4.6px;top:55.7px">PL(UI):</span><span style="left:66.6px;top:55.7px">511</span><span style="left:4.6px;top:73.7px">TIE(σ):</span><span style="left:66.6px;top:73.7px">647.6 fs</span><span style="left:4.6px;top:91.8px">TJ@:</span><span style="left:66.6px;top:91.8px">6.219 ps</span><span style="left:4.6px;top:109.9px">RJ:</span><span style="left:66.6px;top:109.9px">283.1 fs</span><span style="left:4.6px;top:128px">DJ:</span><span style="left:66.6px;top:128px">3.233 ps</span><span style="left:4.6px;top:146.1px">DJ-δδ:</span><span style="left:66.6px;top:146.1px">2.235 ps</span><span style="left:4.6px;top:164.1px">PJ:</span><span style="left:66.6px;top:164.1px">548.0 fs</span><span style="left:4.6px;top:182.2px">DDJ:</span><span style="left:66.6px;top:182.2px">2.685 ps</span><span style="left:4.6px;top:200.3px">ISI:</span><span style="left:66.6px;top:200.3px">2.365 ps</span><span style="left:4.6px;top:218.4px">DCD:</span><span style="left:66.6px;top:218.4px">292.0 fs</span><span style="left:4.6px;top:236.5px">EW@:</span><span style="left:66.6px;top:236.5px">56.28 ps</span></div>
<div class="badge" style="left:1px;top:1258.4px;width:110.4px;height:80px;"><div class="h" style="height:18.4px;line-height:19px;background:#fff24f;color:#111;letter-spacing:0">Ch 1</div><span style="left:4.6px;top:19.6px">100 mV/div</span><span style="left:4.6px;top:37.6px">50 Ω</span><span style="left:4.6px;top:55.6px">25 GHz</span></div>
<div class="bb" style="left:1338.2px;top:1256px;width:38.4px;height:84px"><i style="background:#49cfe0"></i><span style="top:36px;font-size:21.5px;color:#bcbcbc">2</span></div>
<div class="bb" style="left:1382.6px;top:1256px;width:38.6px;height:84px"><i style="background:#e4494d"></i><span style="top:36px;font-size:21.5px;color:#bcbcbc">3</span></div>
<div class="bb" style="left:1427.3px;top:1256px;width:38.5px;height:84px"><i style="background:#8cc63f"></i><span style="top:36px;font-size:21.5px;color:#bcbcbc">4</span></div>
<div class="vs" style="left:1476.4px;top:1257px;height:80px"></div>
<div class="bb" style="left:1487.2px;top:1256px;width:39.4px;height:84px"><i style="background:#ef8c3a"></i><span style="top:18.2px">Add</span><span style="top:35.9px">New</span><span style="top:53.6px">Math</span></div>
<div class="bb" style="left:1532px;top:1256px;width:39.4px;height:84px"><i style="background:#b8b8b8"></i><span style="top:18.2px">Add</span><span style="top:35.9px">New</span><span style="top:53.6px">Ref</span></div>
<div class="bb" style="left:1576.6px;top:1256px;width:39.2px;height:84px"><i style="background:#a45ce0"></i><span style="top:18.2px">Add</span><span style="top:35.9px">New</span><span style="top:53.6px">Bus</span></div>
<div class="bb" style="left:1621.4px;top:1256px;width:39.2px;height:84px"><i style="background:#4e4e4e"></i><span style="top:18.2px">Add</span><span style="top:35.9px">New</span><span style="top:53.6px">Sim</span></div>
<div class="vs" style="left:1671px;top:1257px;height:80px"></div>
<div class="bb" style="left:1682.2px;top:1256px;width:39.4px;height:84px"><i style="background:#4e4e4e"></i><span style="top:36px">AFG</span></div>
<div class="vs" style="left:1731.6px;top:1257px;height:80px"></div>
<div class="badge" style="left:1743.6px;top:1259px;width:196.6px;height:80px"><div class="h" style="height:19.4px;line-height:21px">Horizontal</div><span style="left:3.8px;top:19.4px">40 ns/div</span><span style="left:108.6px;top:19.4px">400 ns</span><span style="left:3.8px;top:37.2px">SR: 125 GS/s</span><span style="left:108.6px;top:37.2px">8 ps/pt</span><span style="left:3.8px;top:55.2px">RL: 50 kpts</span><span style="left:122.6px;top:55.2px">50%</span><svg class="abs" style="left:108px;top:56.5px" width="10" height="14" viewBox="0 0 10 14"><path d="M0.6 0.6 H9.2 V8.4 L4.9 13 L0.6 8.4 Z" fill="#e8872e"/><path d="M2.6 2 L4.9 7.6 L7.2 2" stroke="#222" stroke-width="1.6" fill="none"/></svg></div>
<div class="badge" style="left:1947px;top:1259px;width:156px;height:80px"><div class="h" style="height:19.4px;line-height:21px">Trigger</div><div class="abs" style="left:3.8px;top:21.6px;width:29px;height:14.2px;border-radius:7.5px;background:#fff04a;border:1.2px solid #222;box-sizing:border-box;color:#111;font-size:13px;line-height:12.4px;text-align:center">1</div><svg class="abs" style="left:42px;top:20px" width="20" height="18" viewBox="0 0 20 18"><path d="M1.5 14.5 H5.5 L12.2 3.2 H17.5" stroke="#5f5a96" stroke-width="1.5" fill="none"/></svg><span style="left:69.6px;top:19.4px">0 V</span></div>
<div class="badge" style="left:2110.6px;top:1259px;width:146.6px;height:80px"><div class="h" style="height:19.4px;line-height:21px">Acquisition</div><span style="left:3.4px;top:19.4px">Auto,</span><span style="left:84px;top:19.4px">Analyze</span><span style="left:3.4px;top:37.2px">Sample: 10 bits</span><span style="left:3.4px;top:55.2px">1.227 kAcqs</span></div>
<div class="vs" style="left:2269.4px;top:1257px;height:80px"></div>
<div class="abs" style="left:2281.6px;top:1257.6px;width:86px;height:32.8px;border-radius:6px;background:#5fc43f;color:#fff;font-size:13.3px;line-height:33px;text-align:center;text-shadow:0 0 0.7px #fff;box-shadow:0 0 3px #3a3a3a">Triggered</div>
</body></html>
